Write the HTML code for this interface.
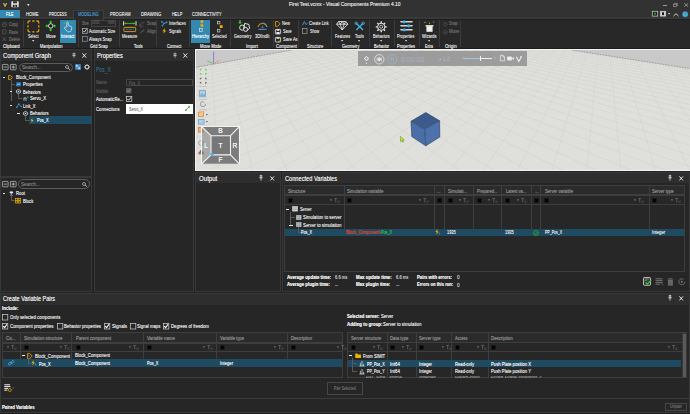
<!DOCTYPE html><html><head><meta charset="utf-8"><style>
html,body{margin:0;padding:0;}
body{width:690px;height:414px;overflow:hidden;position:relative;background:#282828;font-family:"Liberation Sans",sans-serif;}
.a{position:absolute;}
.t{white-space:nowrap;text-shadow:0 0 0.25px currentColor;}
svg.a{overflow:visible;}
</style></head><body>
<div class="a" style="left:0.00px;top:0.00px;width:690.00px;height:49.00px;background:#282828;"></div>
<div class="a" style="left:0.00px;top:0.00px;width:690.00px;height:17.00px;background:#323232;"></div>
<div class="a" style="left:0.00px;top:17.00px;width:690.00px;height:1.50px;background:#393939;"></div>
<div class="a" style="left:0.00px;top:18.50px;width:690.00px;height:1.00px;background:#1f1f1f;"></div>
<div class="a" style="left:0.00px;top:48.30px;width:690.00px;height:1.20px;background:#1c1c1c;"></div>
<div class="a" style="left:2.00px;top:1.80px;width:6.00px;height:5.60px;background:#1b2e55;border-radius:1px;"></div>
<svg class="a" style="left:2px;top:1.8px;" width="7" height="7" viewBox="0 0 7 7"><path d="M0.8 1 L2.2 1 L3 3 L4 1 L5.3 1 L3.6 4.8 L2.5 4.8 Z" fill="#f0b400"/></svg>
<svg class="a" style="left:11.4px;top:1px;" width="9" height="8" viewBox="0 0 9 8"><rect x="0.3" y="0.3" width="7.4" height="5.9" rx="0.8" fill="#e8e8e8"/><rect x="2" y="0.3" width="4" height="2" fill="#2b2b2b"/><rect x="1.8" y="3.8" width="4.4" height="2.4" fill="#2b2b2b"/><rect x="3.6" y="4.2" width="0.8" height="2" fill="#e8e8e8"/></svg>
<svg class="a" style="left:26.6px;top:4px;" width="4" height="4" viewBox="0 0 4 4"><path d="M0 0 L2.6 0 L1.3 2.2 Z" fill="#d8d8d8"/></svg>
<div class="a t" style="left:289.00px;top:1.90px;font-size:5.4px;line-height:5.4px;color:#e0e0e0;transform:scaleX(0.912);transform-origin:0 0;">First Test.vcmx - Visual Components Premium 4.10</div>
<div class="a" style="left:663.20px;top:4.70px;width:3.60px;height:0.70px;background:#9a9a9a;"></div>
<svg class="a" style="left:673.3px;top:3.2px;" width="6" height="5" viewBox="0 0 6 5"><rect x="0.4" y="1.2" width="3" height="2.4" fill="none" stroke="#9a9a9a" stroke-width="0.7"/><path d="M1.4 1.2 V0.4 H4.4 V2.8 H3.4" fill="none" stroke="#9a9a9a" stroke-width="0.7"/></svg>
<svg class="a" style="left:683.8px;top:2.9px;" width="6" height="5" viewBox="0 0 6 5"><path d="M0.3 0.3 L4.2 3.7 M4.2 0.3 L0.3 3.7" stroke="#a0a0a0" stroke-width="0.8"/></svg>
<div class="a" style="left:0.00px;top:9.60px;width:20.00px;height:8.60px;background:#3589b0;"></div>
<div class="a" style="left:73.30px;top:9.60px;width:30.70px;height:10.00px;background:#2a2a2a;border:0.8px solid #3e3e3e;border-bottom:none;box-sizing:border-box;"></div>
<div class="a t" style="left:6.40px;top:11.90px;font-size:5.0px;line-height:5.0px;color:#eef7fc;transform:scaleX(0.701);transform-origin:0 0;">FILE</div>
<div class="a t" style="left:25.80px;top:11.90px;font-size:5.0px;line-height:5.0px;color:#dcdcdc;transform:scaleX(0.833);transform-origin:0 0;">HOME</div>
<div class="a t" style="left:49.00px;top:11.90px;font-size:5.0px;line-height:5.0px;color:#dcdcdc;transform:scaleX(0.724);transform-origin:0 0;">PROCESS</div>
<div class="a t" style="left:78.30px;top:11.90px;font-size:5.0px;line-height:5.0px;color:#4390c0;transform:scaleX(0.784);transform-origin:0 0;">MODELING</div>
<div class="a t" style="left:110.40px;top:11.90px;font-size:5.0px;line-height:5.0px;color:#dcdcdc;transform:scaleX(0.801);transform-origin:0 0;">PROGRAM</div>
<div class="a t" style="left:141.00px;top:11.90px;font-size:5.0px;line-height:5.0px;color:#dcdcdc;transform:scaleX(0.846);transform-origin:0 0;">DRAWING</div>
<div class="a t" style="left:171.70px;top:11.90px;font-size:5.0px;line-height:5.0px;color:#dcdcdc;transform:scaleX(0.789);transform-origin:0 0;">HELP</div>
<div class="a t" style="left:192.00px;top:11.90px;font-size:5.0px;line-height:5.0px;color:#dcdcdc;transform:scaleX(0.798);transform-origin:0 0;">CONNECTIVITY</div>
<svg class="a" style="left:652px;top:10.9px;" width="7" height="7" viewBox="0 0 7 7"><rect x="0.3" y="0.3" width="5.4" height="4.8" fill="#1a1a1a" stroke="#d0d0d0" stroke-width="0.7"/><rect x="2" y="1.8" width="2" height="1.8" fill="#2fa02f"/></svg>
<svg class="a" style="left:659.6px;top:10.9px;" width="7" height="7" viewBox="0 0 7 7"><rect x="0.3" y="0.3" width="5.4" height="4.8" fill="#d0d0d0" stroke="#d0d0d0" stroke-width="0.7"/><rect x="2" y="1.3" width="2" height="2.8" fill="#1a1a1a"/></svg>
<svg class="a" style="left:668px;top:12.6px;" width="4" height="3" viewBox="0 0 4 3"><path d="M0 0 H2.2 L1.1 1.8Z" fill="#d0d0d0"/></svg>
<svg class="a" style="left:673px;top:12.5px;" width="7" height="5" viewBox="0 0 7 5"><path d="M0.5 3 L3 0.7 L5.5 3" fill="none" stroke="#e0e0e0" stroke-width="0.9"/></svg>
<svg class="a" style="left:681.6px;top:10.8px;" width="8" height="8" viewBox="0 0 8 8"><circle cx="3.2" cy="3.2" r="3" fill="#4cb4e6" stroke="#3a2a20" stroke-width="0.4"/><path d="M2.3 2.4 Q3.2 1.6 4 2.4 Q4.2 3.3 3.2 3.6 V4.3" fill="none" stroke="#2a6a90" stroke-width="0.6"/></svg>
<div class="a" style="left:22.60px;top:20.00px;width:0.90px;height:27.00px;background:#3b3b3b;"></div>
<div class="a" style="left:78.40px;top:20.00px;width:0.90px;height:27.00px;background:#3b3b3b;"></div>
<div class="a" style="left:118.60px;top:20.00px;width:0.90px;height:27.00px;background:#3b3b3b;"></div>
<div class="a" style="left:155.80px;top:20.00px;width:0.90px;height:27.00px;background:#3b3b3b;"></div>
<div class="a" style="left:188.80px;top:20.00px;width:0.90px;height:27.00px;background:#3b3b3b;"></div>
<div class="a" style="left:229.80px;top:20.00px;width:0.90px;height:27.00px;background:#3b3b3b;"></div>
<div class="a" style="left:272.60px;top:20.00px;width:0.90px;height:27.00px;background:#3b3b3b;"></div>
<div class="a" style="left:298.20px;top:20.00px;width:0.90px;height:27.00px;background:#3b3b3b;"></div>
<div class="a" style="left:330.80px;top:20.00px;width:0.90px;height:27.00px;background:#3b3b3b;"></div>
<div class="a" style="left:369.40px;top:20.00px;width:0.90px;height:27.00px;background:#3b3b3b;"></div>
<div class="a" style="left:393.50px;top:20.00px;width:0.90px;height:27.00px;background:#3b3b3b;"></div>
<div class="a" style="left:419.00px;top:20.00px;width:0.90px;height:27.00px;background:#3b3b3b;"></div>
<div class="a" style="left:439.20px;top:20.00px;width:0.90px;height:27.00px;background:#3b3b3b;"></div>
<div class="a" style="left:460.20px;top:20.00px;width:0.90px;height:27.00px;background:#3b3b3b;"></div>
<div class="a t" style="left:2.90px;top:45.45px;font-size:4.9px;line-height:4.9px;color:#e4e4e4;transform:scaleX(0.801);transform-origin:0 0;">Clipboard</div>
<div class="a t" style="left:40.00px;top:45.45px;font-size:4.9px;line-height:4.9px;color:#e4e4e4;transform:scaleX(0.813);transform-origin:0 0;">Manipulation</div>
<div class="a t" style="left:90.00px;top:45.45px;font-size:4.9px;line-height:4.9px;color:#e4e4e4;transform:scaleX(0.803);transform-origin:0 0;">Grid Snap</div>
<div class="a t" style="left:134.40px;top:45.45px;font-size:4.9px;line-height:4.9px;color:#e4e4e4;transform:scaleX(0.753);transform-origin:0 0;">Tools</div>
<div class="a t" style="left:166.60px;top:45.45px;font-size:4.9px;line-height:4.9px;color:#e4e4e4;transform:scaleX(0.788);transform-origin:0 0;">Connect</div>
<div class="a t" style="left:199.60px;top:45.45px;font-size:4.9px;line-height:4.9px;color:#e4e4e4;transform:scaleX(0.837);transform-origin:0 0;">Move Mode</div>
<div class="a t" style="left:246.00px;top:45.45px;font-size:4.9px;line-height:4.9px;color:#e4e4e4;transform:scaleX(0.862);transform-origin:0 0;">Import</div>
<div class="a t" style="left:275.50px;top:45.45px;font-size:4.9px;line-height:4.9px;color:#e4e4e4;transform:scaleX(0.825);transform-origin:0 0;">Component</div>
<div class="a t" style="left:307.00px;top:45.45px;font-size:4.9px;line-height:4.9px;color:#e4e4e4;transform:scaleX(0.814);transform-origin:0 0;">Structure</div>
<div class="a t" style="left:341.80px;top:45.45px;font-size:4.9px;line-height:4.9px;color:#e4e4e4;transform:scaleX(0.809);transform-origin:0 0;">Geometry</div>
<div class="a t" style="left:374.00px;top:45.45px;font-size:4.9px;line-height:4.9px;color:#e4e4e4;transform:scaleX(0.785);transform-origin:0 0;">Behavior</div>
<div class="a t" style="left:397.20px;top:45.45px;font-size:4.9px;line-height:4.9px;color:#e4e4e4;transform:scaleX(0.810);transform-origin:0 0;">Properties</div>
<div class="a t" style="left:424.70px;top:45.45px;font-size:4.9px;line-height:4.9px;color:#e4e4e4;transform:scaleX(0.698);transform-origin:0 0;">Extra</div>
<div class="a t" style="left:445.00px;top:45.45px;font-size:4.9px;line-height:4.9px;color:#e4e4e4;transform:scaleX(0.887);transform-origin:0 0;">Origin</div>
<svg class="a" style="left:1.7px;top:21.5px;" width="6" height="7" viewBox="0 0 6 7"><circle cx="2.5" cy="2.6" r="2.1" fill="none" stroke="#6a6a6a" stroke-width="0.6"/><path d="M1.5 2.6 L2.5 1.6 L3.5 2.6" fill="none" stroke="#6a6a6a" stroke-width="0.5"/></svg>
<div class="a t" style="left:9.00px;top:21.70px;font-size:5.0px;line-height:5.0px;color:#6c6c6c;transform:scaleX(0.773);transform-origin:0 0;">Copy</div>
<svg class="a" style="left:2px;top:29px;" width="6" height="7" viewBox="0 0 6 7"><rect x="0.5" y="0.8" width="3.6" height="4" rx="0.6" fill="none" stroke="#6a6a6a" stroke-width="0.6"/></svg>
<div class="a t" style="left:9.00px;top:29.50px;font-size:5.0px;line-height:5.0px;color:#6c6c6c;transform:scaleX(0.703);transform-origin:0 0;">Paste</div>
<svg class="a" style="left:2px;top:37px;" width="6" height="6" viewBox="0 0 6 6"><path d="M0.4 0.4 L4 4 M4 0.4 L0.4 4" stroke="#6a6a6a" stroke-width="0.6"/></svg>
<div class="a t" style="left:9.00px;top:37.00px;font-size:5.0px;line-height:5.0px;color:#6c6c6c;transform:scaleX(0.740);transform-origin:0 0;">Delete</div>
<svg class="a" style="left:26.9px;top:19.8px;" width="14" height="14" viewBox="0 0 14 14"><path d="M1 3.6 V2.6 Q1 1 2.6 1 H3.4 M5.3 1 H7.5 M9.4 1 H10.2 Q11.8 1 11.8 2.6 V3.6 M11.8 5.3 V7.5 M11.8 9.2 V10.2 Q11.8 11.8 10.2 11.8 H9.4 M7.5 11.8 H5.3 M3.4 11.8 H2.6 Q1 11.8 1 10.2 V9.2 M1 7.5 V5.3" fill="none" stroke="#14203a" stroke-width="2.1"/><path d="M1 3.6 V2.6 Q1 1 2.6 1 H3.4 M5.3 1 H7.5 M9.4 1 H10.2 Q11.8 1 11.8 2.6 V3.6 M11.8 5.3 V7.5 M11.8 9.2 V10.2 Q11.8 11.8 10.2 11.8 H9.4 M7.5 11.8 H5.3 M3.4 11.8 H2.6 Q1 11.8 1 10.2 V9.2 M1 7.5 V5.3" fill="none" stroke="#eaa600" stroke-width="1.3"/></svg>
<div class="a t" style="left:27.80px;top:34.20px;font-size:5.4px;line-height:5.4px;color:#dcdcdc;transform:scaleX(0.699);transform-origin:0 0;">Select</div>
<svg class="a" style="left:32.4px;top:40px;" width="4" height="3" viewBox="0 0 4 3"><path d="M0 0 H2.4 L1.2 1.8Z" fill="#e0e0e0"/></svg>
<svg class="a" style="left:44.9px;top:20.1px;" width="13" height="13" viewBox="0 0 13 13"><path d="M5.7 0.2 L7.6 2.4 H6.5 V3.6 H4.9 V2.4 H3.8Z M5.7 11.6 L7.6 9.4 H6.5 V8.2 H4.9 V9.4 H3.8Z M0.1 5.9 L2.3 4 V5.1 H3.5 V6.7 H2.3 V7.8Z M11.3 5.9 L9.1 4 V5.1 H7.9 V6.7 H9.1 V7.8Z" fill="#32cc22" stroke="#1a3a1a" stroke-width="0.25"/><circle cx="5.7" cy="5.9" r="2.2" fill="#101010" stroke="#f0f0f0" stroke-width="0.9"/></svg>
<div class="a t" style="left:45.80px;top:34.20px;font-size:5.4px;line-height:5.4px;color:#dcdcdc;transform:scaleX(0.748);transform-origin:0 0;">Move</div>
<div class="a" style="left:59.70px;top:19.70px;width:16.60px;height:23.30px;background:#3589b0;"></div>
<svg class="a" style="left:63px;top:20.6px;" width="11" height="13" viewBox="0 0 11 13"><path d="M0.4 1.9 H2.4 M9.6 1.9 H7.6" stroke="#3ccc2c" stroke-width="1"/><path d="M3.8 5.8 V1.3 Q4.5 0.3 5.2 1.3 V4.6 L8.2 5.4 Q9 5.8 8.8 6.8 L8.3 9.4 Q7.6 10.8 6.2 10.8 H5.2 Q4.2 10.8 3.6 9.9 L1.5 7.3 Q1.2 6.5 2.1 6.3 Z" fill="none" stroke="#dfeaf0" stroke-width="0.75"/></svg>
<div class="a t" style="left:61.40px;top:34.30px;font-size:5.2px;line-height:5.2px;color:#f0f6fa;transform:scaleX(0.772);transform-origin:0 0;">Interact</div>
<div class="a t" style="left:81.50px;top:21.20px;font-size:5.0px;line-height:5.0px;color:#6c6c6c;transform:scaleX(0.687);transform-origin:0 0;">Size</div>
<div class="a" style="left:90.60px;top:19.80px;width:25.60px;height:7.30px;border:0.7px solid #444;box-sizing:border-box;"></div>
<div class="a t" style="left:91.80px;top:21.30px;font-size:4.8px;line-height:4.8px;color:#5a5a5a;transform:scaleX(0.685);transform-origin:0 0;">1000</div>
<div class="a t" style="left:108.30px;top:21.30px;font-size:4.8px;line-height:4.8px;color:#5a5a5a;transform:scaleX(0.836);transform-origin:0 0;">mm</div>
<svg class="a" style="left:82px;top:28.3px;" width="7" height="7" viewBox="0 0 7 7"><rect x="0.35" y="0.35" width="4.9" height="4.9" fill="none" stroke="#bbbbbb" stroke-width="0.7"/><path d="M1.2 2.8 L2.4 4 L4.5 1.2" fill="none" stroke="#f0f0f0" stroke-width="0.8"/></svg>
<div class="a t" style="left:89.40px;top:28.90px;font-size:5.2px;line-height:5.2px;color:#dcdcdc;transform:scaleX(0.755);transform-origin:0 0;">Automatic Size</div>
<svg class="a" style="left:82px;top:36.3px;" width="7" height="7" viewBox="0 0 7 7"><rect x="0.35" y="0.35" width="4.9" height="4.9" fill="none" stroke="#9a9a9a" stroke-width="0.7"/></svg>
<div class="a t" style="left:89.40px;top:36.80px;font-size:5.2px;line-height:5.2px;color:#dcdcdc;transform:scaleX(0.752);transform-origin:0 0;">Always Snap</div>
<svg class="a" style="left:122.5px;top:20.8px;" width="15" height="12" viewBox="0 0 15 12"><path d="M0.6 0.2 V4.6 M13 0.2 V4.6" stroke="#dddddd" stroke-width="1"/><path d="M1.4 2.4 H12.2" stroke="#3ccc2c" stroke-width="0.9"/><path d="M1.4 2.4 L3 1.3 V3.5Z M12.2 2.4 L10.6 1.3 V3.5Z" fill="#3ccc2c"/><rect x="0.9" y="6.4" width="11.8" height="4.2" rx="0.8" fill="#1e2a44" stroke="#e8a800" stroke-width="0.9"/><path d="M3 8.5 H10.6" stroke="#8fa0c0" stroke-width="0.6" stroke-dasharray="0.8 0.6"/></svg>
<div class="a t" style="left:121.60px;top:34.30px;font-size:5.2px;line-height:5.2px;color:#dcdcdc;transform:scaleX(0.756);transform-origin:0 0;">Measure</div>
<svg class="a" style="left:139.3px;top:21.7px;" width="7" height="6" viewBox="0 0 7 6"><path d="M0.6 3.8 L3.2 1.2 M3 0.4 L5.6 0.4 M2.2 2 A1.5 1.5 0 1 0 3.6 3.4" fill="none" stroke="#666" stroke-width="0.6"/></svg>
<div class="a t" style="left:146.60px;top:21.30px;font-size:5.0px;line-height:5.0px;color:#6c6c6c;transform:scaleX(0.778);transform-origin:0 0;">Snap</div>
<svg class="a" style="left:139.3px;top:29px;" width="7" height="6" viewBox="0 0 7 6"><path d="M0.5 4 L5 0.5 M1.5 4 L5.5 1" stroke="#666" stroke-width="0.6"/></svg>
<div class="a t" style="left:146.60px;top:29.10px;font-size:5.0px;line-height:5.0px;color:#6c6c6c;transform:scaleX(0.820);transform-origin:0 0;">Align</div>
<svg class="a" style="left:160.8px;top:21px;" width="8" height="7" viewBox="0 0 8 7"><path d="M3 2.6 L0.8 0.8 M3 2.6 L5.6 1.4 M3 2.6 L1.4 4.8" stroke="#3aa8dc" stroke-width="0.9"/><circle cx="0.8" cy="0.8" r="0.8" fill="#3aa8dc"/><circle cx="5.6" cy="1.4" r="0.8" fill="#3aa8dc"/><circle cx="1.4" cy="4.8" r="0.8" fill="#3aa8dc"/></svg>
<div class="a t" style="left:168.90px;top:21.10px;font-size:5.0px;line-height:5.0px;color:#dcdcdc;transform:scaleX(0.765);transform-origin:0 0;">Interfaces</div>
<svg class="a" style="left:162px;top:28.4px;" width="6" height="7" viewBox="0 0 6 7"><path d="M2.8 0 L0.4 3.2 H2 L1.4 5.8 L4.2 2.4 H2.5Z" fill="#f0b000"/></svg>
<div class="a t" style="left:168.90px;top:29.10px;font-size:5.0px;line-height:5.0px;color:#dcdcdc;transform:scaleX(0.738);transform-origin:0 0;">Signals</div>
<div class="a" style="left:191.00px;top:19.70px;width:19.00px;height:23.30px;background:#3589b0;"></div>
<svg class="a" style="left:199.8px;top:20.2px;" width="6" height="14" viewBox="0 0 6 14"><rect x="0.6" y="0.3" width="2.6" height="2.4" fill="#f0b000"/><rect x="0.6" y="4.3" width="2.6" height="2.4" fill="#f0b000"/><path d="M1.9 2.7 V4.3" stroke="#f0b000" stroke-width="0.5"/><rect x="-0.6" y="8.6" width="2.8" height="2.8" fill="none" stroke="#f0f0f0" stroke-width="0.6"/></svg>
<div class="a t" style="left:192.00px;top:34.35px;font-size:5.1px;line-height:5.1px;color:#f0f6fa;transform:scaleX(0.779);transform-origin:0 0;">Hierarchy</div>
<svg class="a" style="left:216.5px;top:20.5px;" width="7" height="13" viewBox="0 0 7 13"><rect x="0.3" y="0.3" width="2.6" height="2.6" fill="none" stroke="#e0e0e0" stroke-width="0.6"/><rect x="2.8" y="4.2" width="2.8" height="2.8" fill="#f0b000"/><rect x="0.3" y="8.4" width="2.6" height="2.6" fill="none" stroke="#e0e0e0" stroke-width="0.6"/></svg>
<div class="a t" style="left:212.40px;top:34.35px;font-size:5.1px;line-height:5.1px;color:#dcdcdc;transform:scaleX(0.741);transform-origin:0 0;">Selected</div>
<svg class="a" style="left:237.5px;top:19.7px;" width="14" height="14" viewBox="0 0 14 14"><path d="M2 0 V2.4" stroke="#2ecc2e" stroke-width="1.4"/><path d="M0.2 2 H3.8 L2 4.2Z" fill="#2ecc2e"/><circle cx="4.2" cy="7.6" r="2.6" fill="#2b2b2b" stroke="#f0f0f0" stroke-width="0.9"/><path d="M6.6 3.4 L10.8 4.4 L11.6 8.4 L8.6 10.8 L5.6 8.6Z" fill="none" stroke="#f0f0f0" stroke-width="0.9"/><circle cx="7.6" cy="9.4" r="2" fill="#2b2b2b" stroke="#f0f0f0" stroke-width="0.9"/></svg>
<div class="a t" style="left:234.40px;top:34.30px;font-size:5.2px;line-height:5.2px;color:#dcdcdc;transform:scaleX(0.762);transform-origin:0 0;">Geometry</div>
<svg class="a" style="left:256.5px;top:21.8px;" width="12" height="9" viewBox="0 0 12 9"><path d="M1 5 A4.6 4.6 0 0 1 10 5" fill="none" stroke="#e8a000" stroke-width="1"/><path d="M6 1 A4.6 4.6 0 0 1 10 5" fill="none" stroke="#3aa0d8" stroke-width="1"/><path d="M5.5 3.2 L4.4 6 L6.6 6Z" fill="#777"/><rect x="1.5" y="6.8" width="8" height="1.2" fill="#3a8ad0"/></svg>
<div class="a t" style="left:254.70px;top:34.30px;font-size:5.2px;line-height:5.2px;color:#dcdcdc;transform:scaleX(0.808);transform-origin:0 0;">3DfindIt</div>
<svg class="a" style="left:275px;top:21px;" width="7" height="7" viewBox="0 0 7 7"><path d="M0.5 0.5 H2.8 L5 2.9 L2.8 5.3 H0.5Z" fill="none" stroke="#e8a800" stroke-width="0.8"/></svg>
<div class="a t" style="left:282.00px;top:21.40px;font-size:5.0px;line-height:5.0px;color:#dcdcdc;transform:scaleX(0.796);transform-origin:0 0;">New</div>
<svg class="a" style="left:275px;top:29px;" width="7" height="7" viewBox="0 0 7 7"><rect x="0.4" y="0.4" width="5.2" height="4.6" rx="0.5" fill="none" stroke="#e8e8e8" stroke-width="0.8"/><rect x="1.6" y="0.4" width="2.8" height="1.4" fill="#e8e8e8"/><rect x="1.4" y="3" width="3.2" height="2" fill="#e8e8e8"/></svg>
<div class="a t" style="left:282.50px;top:29.10px;font-size:5.0px;line-height:5.0px;color:#dcdcdc;transform:scaleX(0.763);transform-origin:0 0;">Save</div>
<svg class="a" style="left:275px;top:36.5px;" width="7" height="7" viewBox="0 0 7 7"><rect x="0.4" y="0.4" width="5.2" height="4.6" rx="0.5" fill="none" stroke="#e8e8e8" stroke-width="0.8"/><rect x="1.6" y="0.4" width="2.8" height="1.4" fill="#e8e8e8"/><path d="M3 5.2 L5.8 3.2" stroke="#e8a800" stroke-width="1"/></svg>
<div class="a t" style="left:282.50px;top:37.00px;font-size:5.0px;line-height:5.0px;color:#dcdcdc;transform:scaleX(0.790);transform-origin:0 0;">Save As</div>
<svg class="a" style="left:301.8px;top:21px;" width="7" height="6" viewBox="0 0 7 6"><path d="M0.5 4.2 L2.4 0.6 L4 3.6 L5.6 2.2" fill="none" stroke="#3a9ad8" stroke-width="0.9"/></svg>
<div class="a t" style="left:308.80px;top:21.40px;font-size:5.0px;line-height:5.0px;color:#dcdcdc;transform:scaleX(0.770);transform-origin:0 0;">Create Link</div>
<svg class="a" style="left:302.4px;top:28.4px;" width="7" height="7" viewBox="0 0 7 7"><rect x="0.4" y="0.4" width="4.6" height="5" fill="none" stroke="#a0a0a0" stroke-width="0.7"/></svg>
<div class="a t" style="left:310.00px;top:29.30px;font-size:5.0px;line-height:5.0px;color:#dcdcdc;transform:scaleX(0.733);transform-origin:0 0;">Show</div>
<svg class="a" style="left:336px;top:21px;" width="14" height="11" viewBox="0 0 14 11"><path d="M2.6 0.5 H9.8 L11.9 3.2 L6.2 8.9 L0.5 3.2Z M0.5 3.2 H11.9 M4.2 3.2 L6.2 8.9 L8.2 3.2 M2.6 0.5 L4.2 3.2 L6.2 0.5 L8.2 3.2 L9.8 0.5" fill="none" stroke="#f4f4f4" stroke-width="0.8"/></svg>
<div class="a t" style="left:334.80px;top:34.30px;font-size:5.2px;line-height:5.2px;color:#dcdcdc;transform:scaleX(0.735);transform-origin:0 0;">Features</div>
<svg class="a" style="left:341px;top:40px;" width="4" height="3" viewBox="0 0 4 3"><path d="M0 0 H2.2 L1.1 1.8Z" fill="#e0e0e0"/></svg>
<svg class="a" style="left:354.5px;top:21.5px;" width="11" height="11" viewBox="0 0 11 11"><path d="M1.4 1.4 L8 8 M8 1.4 L1.4 8" stroke="#4ab8ec" stroke-width="1.3"/><circle cx="1.2" cy="1.2" r="1.2" fill="none" stroke="#4ab8ec" stroke-width="0.8"/><circle cx="8.2" cy="1.2" r="1.2" fill="none" stroke="#4ab8ec" stroke-width="0.8"/></svg>
<div class="a t" style="left:355.00px;top:34.30px;font-size:5.2px;line-height:5.2px;color:#dcdcdc;transform:scaleX(0.726);transform-origin:0 0;">Tools</div>
<svg class="a" style="left:358.3px;top:40px;" width="4" height="3" viewBox="0 0 4 3"><path d="M0 0 H2.2 L1.1 1.8Z" fill="#e0e0e0"/></svg>
<svg class="a" style="left:375.4px;top:21px;" width="14" height="13" viewBox="0 0 14 13"><circle cx="6.2" cy="5.8" r="3.6" fill="none" stroke="#f0f0f0" stroke-width="1"/><circle cx="6.2" cy="5.8" r="1.5" fill="none" stroke="#f0f0f0" stroke-width="0.7"/><path d="M6.2 0.3 V2 M6.2 9.6 V11.3 M0.7 5.8 H2.4 M10 5.8 H11.7 M2.3 1.9 L3.5 3.1 M8.9 8.5 L10.1 9.7 M10.1 1.9 L8.9 3.1 M2.3 9.7 L3.5 8.5" stroke="#f0f0f0" stroke-width="1.3"/></svg>
<div class="a t" style="left:373.20px;top:34.10px;font-size:5.2px;line-height:5.2px;color:#dcdcdc;transform:scaleX(0.726);transform-origin:0 0;">Behaviors</div>
<svg class="a" style="left:380px;top:40.2px;" width="4" height="3" viewBox="0 0 4 3"><path d="M0 0 H2.2 L1.1 1.8Z" fill="#e0e0e0"/></svg>
<svg class="a" style="left:399.5px;top:20.2px;" width="14" height="13" viewBox="0 0 14 13"><path d="M1 1.8 H12 M1 5.8 H12 M1 9.8 H12" stroke="#d8d8d8" stroke-width="1.6" stroke-linecap="round"/><circle cx="4" cy="1.8" r="1.6" fill="#3ab4ec"/><circle cx="8.6" cy="5.8" r="1.6" fill="#3ab4ec"/><circle cx="4.4" cy="9.8" r="1.6" fill="#3ab4ec"/></svg>
<div class="a t" style="left:397.20px;top:34.10px;font-size:5.2px;line-height:5.2px;color:#dcdcdc;transform:scaleX(0.734);transform-origin:0 0;">Properties</div>
<svg class="a" style="left:405.2px;top:40.2px;" width="4" height="3" viewBox="0 0 4 3"><path d="M0 0 H2.2 L1.1 1.8Z" fill="#e0e0e0"/></svg>
<svg class="a" style="left:423.5px;top:21px;" width="12" height="12" viewBox="0 0 12 12"><rect x="2.4" y="4.8" width="6.2" height="6" fill="#f0f0f0"/><rect x="1.6" y="4" width="7.8" height="1.6" fill="#d8d8d8"/><circle cx="1" cy="1.4" r="0.6" fill="#f0b000"/><circle cx="5.5" cy="2.2" r="0.6" fill="#f0b000"/><circle cx="9.6" cy="1" r="0.6" fill="#f0b000"/></svg>
<div class="a t" style="left:421.80px;top:34.10px;font-size:5.2px;line-height:5.2px;color:#dcdcdc;transform:scaleX(0.772);transform-origin:0 0;">Wizards</div>
<svg class="a" style="left:428px;top:40.2px;" width="4" height="3" viewBox="0 0 4 3"><path d="M0 0 H2.2 L1.1 1.8Z" fill="#e0e0e0"/></svg>
<svg class="a" style="left:442.8px;top:21.6px;" width="6" height="6" viewBox="0 0 6 6"><path d="M2.3 0.3 L4.3 2.3 L2.3 4.3 L0.3 2.3Z" fill="none" stroke="#5e5e5e" stroke-width="0.7"/></svg>
<div class="a t" style="left:449.30px;top:21.30px;font-size:5.0px;line-height:5.0px;color:#6c6c6c;transform:scaleX(0.744);transform-origin:0 0;">Snap</div>
<svg class="a" style="left:442.8px;top:29.6px;" width="6" height="6" viewBox="0 0 6 6"><circle cx="2.3" cy="2.3" r="1.9" fill="none" stroke="#5e5e5e" stroke-width="0.6"/><circle cx="2.3" cy="2.3" r="0.6" fill="#5e5e5e"/></svg>
<div class="a t" style="left:449.30px;top:29.10px;font-size:5.0px;line-height:5.0px;color:#6c6c6c;transform:scaleX(0.833);transform-origin:0 0;">Move</div>
<div class="a" style="left:0.00px;top:48.60px;width:690.00px;height:365.40px;background:#222222;"></div>
<div class="a" style="left:0.00px;top:49.00px;width:92.40px;height:128.00px;background:#262626;"></div>
<div class="a" style="left:0.00px;top:49.00px;width:92.40px;height:11.80px;background:#2e2e2e;"></div>
<div class="a" style="left:0.00px;top:49.00px;width:92.40px;height:128.00px;border:1px solid #383838;box-sizing:border-box;"></div>
<div class="a" style="left:0.00px;top:177.00px;width:92.40px;height:114.80px;background:#262626;"></div>
<div class="a" style="left:0.00px;top:177.00px;width:92.40px;height:114.80px;border:1px solid #383838;box-sizing:border-box;"></div>
<div class="a" style="left:93.50px;top:49.00px;width:100.10px;height:242.80px;background:#262626;"></div>
<div class="a" style="left:93.50px;top:49.00px;width:100.10px;height:11.80px;background:#2e2e2e;"></div>
<div class="a" style="left:93.50px;top:49.00px;width:100.10px;height:242.80px;border:1px solid #383838;box-sizing:border-box;"></div>
<div class="a" style="left:194.60px;top:171.80px;width:86.40px;height:120.00px;background:#262626;"></div>
<div class="a" style="left:194.60px;top:171.80px;width:86.40px;height:11.60px;background:#2e2e2e;"></div>
<div class="a" style="left:194.60px;top:171.80px;width:86.40px;height:120.00px;border:1px solid #383838;box-sizing:border-box;"></div>
<div class="a" style="left:281.80px;top:171.80px;width:408.20px;height:120.00px;background:#262626;"></div>
<div class="a" style="left:281.80px;top:171.80px;width:408.20px;height:11.60px;background:#2e2e2e;"></div>
<div class="a" style="left:281.80px;top:171.80px;width:408.20px;height:120.00px;border:1px solid #383838;box-sizing:border-box;"></div>
<div class="a" style="left:0.00px;top:293.00px;width:690.00px;height:119.60px;background:#262626;"></div>
<div class="a" style="left:0.00px;top:293.00px;width:690.00px;height:12.40px;background:#2e2e2e;"></div>
<div class="a" style="left:0.00px;top:293.00px;width:690.00px;height:119.60px;border:1px solid #383838;box-sizing:border-box;"></div>
<div class="a t" style="left:3.00px;top:51.70px;font-size:7.0px;line-height:7.0px;color:#e4e4e4;transform:scaleX(0.833);transform-origin:0 0;">Component Graph</div>
<svg class="a" style="left:72px;top:53px;" width="5" height="6" viewBox="0 0 5 6"><path d="M0.8 0.3 H3.2 M1.2 0.3 V2.4 H2.8 V0.3 M0.4 2.6 H3.6 M2 2.6 V4.8" stroke="#d0d0d0" stroke-width="0.7" fill="none"/></svg>
<svg class="a" style="left:82px;top:52.9px;" width="6" height="6" viewBox="0 0 6 6"><path d="M0.4 0.4 L4.199999999999999 4.6 M4.199999999999999 0.4 L0.4 4.6" stroke="#e8e8e8" stroke-width="1"/></svg>
<svg class="a" style="left:2px;top:63.8px;" width="8" height="8" viewBox="0 0 8 8"><rect x="0.4" y="0.4" width="5.7" height="5.4" rx="0.6" fill="none" stroke="#c8c8c8" stroke-width="0.7"/><path d="M1.6 3.1 H4.9" stroke="#e0e0e0" stroke-width="0.7"/></svg>
<svg class="a" style="left:9.7px;top:63.8px;" width="8" height="8" viewBox="0 0 8 8"><rect x="0.4" y="0.4" width="5.7" height="5.4" rx="0.6" fill="none" stroke="#c8c8c8" stroke-width="0.7"/><path d="M1.6 3.1 H4.9 M3.25 1.5 V4.7" stroke="#e0e0e0" stroke-width="0.7"/></svg>
<div class="a" style="left:18.50px;top:62.70px;width:54.50px;height:9.30px;border:0.9px solid #5c5c5c;border-radius:5px;box-sizing:border-box;"></div>
<div class="a t" style="left:21.90px;top:65.25px;font-size:5.6px;line-height:5.6px;color:#7a7a7a;transform:scaleX(0.830);transform-origin:0 0;">Search...</div>
<svg class="a" style="left:65px;top:64.9px;" width="7" height="6" viewBox="0 0 7 6"><circle cx="2" cy="2" r="1.5" fill="none" stroke="#c0c0c0" stroke-width="0.7"/><path d="M3.1 3.1 L5 4.8" stroke="#c0c0c0" stroke-width="0.9"/></svg>
<svg class="a" style="left:75px;top:64px;" width="7" height="7" viewBox="0 0 7 7"><rect x="0.2" y="0.2" width="5.6" height="5.6" fill="#4a8ac0"/><rect x="0.8" y="0.8" width="2" height="2" fill="#a8d8f0"/><rect x="3.2" y="3.2" width="2" height="2" fill="#a8d8f0"/></svg>
<svg class="a" style="left:84px;top:64px;" width="7" height="7" viewBox="0 0 7 7"><circle cx="3" cy="3" r="1.8" fill="none" stroke="#c8c8c8" stroke-width="1.1"/><path d="M3 0 V1.2 M3 4.8 V6 M0 3 H1.2 M4.8 3 H6 M0.9 0.9 L1.7 1.7 M4.3 4.3 L5.1 5.1 M5.1 0.9 L4.3 1.7 M0.9 5.1 L1.7 4.3" stroke="#c8c8c8" stroke-width="0.9"/></svg>
<div class="a" style="left:2.60px;top:76.50px;width:2.20px;height:0.90px;background:#e0e0e0;"></div>
<svg class="a" style="left:8.3px;top:74.6px;" width="6" height="6" viewBox="0 0 6 6"><path d="M0.6 0.5 H2.5 L4.6 2.5 L2.5 4.5 H0.6Z" fill="none" stroke="#e0a000" stroke-width="0.9"/><path d="M1.6 1.6 L3 2.5 L1.6 3.4Z" fill="#3a6ab0"/></svg>
<div class="a t" style="left:15.70px;top:74.90px;font-size:5.6px;line-height:5.6px;color:#e2e2e2;transform:scaleX(0.758);transform-origin:0 0;">Block_Component</div>
<div class="a" style="left:10.70px;top:80.00px;width:0.70px;height:21.00px;background:#5a5a5a;"></div>
<div class="a" style="left:11.00px;top:84.00px;width:3.60px;height:0.70px;background:#5a5a5a;"></div>
<svg class="a" style="left:16px;top:82px;" width="6" height="6" viewBox="0 0 6 6"><rect x="0.2" y="0.2" width="4.6" height="4.2" fill="#2f78b8"/><path d="M1 3.4 L2.2 1.8 L3 2.8 L4 1.2" stroke="#bfe4f8" stroke-width="0.6" fill="none"/></svg>
<div class="a t" style="left:23.00px;top:82.10px;font-size:5.6px;line-height:5.6px;color:#e2e2e2;transform:scaleX(0.768);transform-origin:0 0;">Properties</div>
<div class="a" style="left:9.80px;top:91.20px;width:2.20px;height:0.90px;background:#e0e0e0;"></div>
<svg class="a" style="left:16px;top:89.2px;" width="6" height="6" viewBox="0 0 6 6"><path d="M2.5 0.4 L4.6 1.6 V3.4 L2.5 4.6 L0.4 3.4 V1.6Z" fill="none" stroke="#e0e0e0" stroke-width="0.8"/><circle cx="2.5" cy="2.5" r="0.8" fill="#e0e0e0"/></svg>
<div class="a t" style="left:23.00px;top:89.50px;font-size:5.6px;line-height:5.6px;color:#e2e2e2;transform:scaleX(0.718);transform-origin:0 0;">Behaviors</div>
<div class="a" style="left:17.60px;top:94.00px;width:0.70px;height:4.40px;background:#5a5a5a;"></div>
<div class="a" style="left:17.60px;top:98.00px;width:4.00px;height:0.70px;background:#5a5a5a;"></div>
<svg class="a" style="left:23px;top:95.6px;" width="7" height="6" viewBox="0 0 7 6"><rect x="0" y="1.8" width="4" height="3" fill="#3a70c0"/><path d="M0.2 2.6 Q2 -0.2 3.8 2.6" fill="#f0b000"/><rect x="4.2" y="0.6" width="1.2" height="1.2" fill="#2ecc2e"/></svg>
<div class="a t" style="left:29.60px;top:96.00px;font-size:5.6px;line-height:5.6px;color:#e2e2e2;transform:scaleX(0.749);transform-origin:0 0;">Servo_X</div>
<div class="a" style="left:9.80px;top:105.20px;width:2.20px;height:0.90px;background:#e0e0e0;"></div>
<svg class="a" style="left:15.6px;top:102.8px;" width="7" height="6" viewBox="0 0 7 6"><path d="M0.8 4.2 L2.8 1 L5.2 3.6" fill="none" stroke="#4aa0d8" stroke-width="0.8"/><circle cx="0.8" cy="4.2" r="0.7" fill="#4aa0d8"/><circle cx="2.8" cy="1" r="0.7" fill="#4aa0d8"/><circle cx="5.2" cy="3.6" r="0.7" fill="#4aa0d8"/></svg>
<div class="a t" style="left:22.70px;top:103.70px;font-size:5.6px;line-height:5.6px;color:#e2e2e2;transform:scaleX(0.724);transform-origin:0 0;">Link_X</div>
<div class="a" style="left:17.40px;top:112.70px;width:2.20px;height:0.90px;background:#e0e0e0;"></div>
<svg class="a" style="left:22.7px;top:110.7px;" width="6" height="6" viewBox="0 0 6 6"><path d="M2.5 0.4 L4.6 1.6 V3.4 L2.5 4.6 L0.4 3.4 V1.6Z" fill="none" stroke="#e0e0e0" stroke-width="0.8"/><circle cx="2.5" cy="2.5" r="0.8" fill="#e0e0e0"/></svg>
<div class="a t" style="left:29.60px;top:111.00px;font-size:5.6px;line-height:5.6px;color:#e2e2e2;transform:scaleX(0.746);transform-origin:0 0;">Behaviors</div>
<div class="a" style="left:24.60px;top:115.60px;width:0.70px;height:4.40px;background:#5a5a5a;"></div>
<div class="a" style="left:24.60px;top:119.60px;width:4.00px;height:0.70px;background:#5a5a5a;"></div>
<div class="a" style="left:28.90px;top:116.30px;width:63.10px;height:7.40px;background:#1f4b62;"></div>
<svg class="a" style="left:30.3px;top:117.6px;" width="6" height="6" viewBox="0 0 6 6"><path d="M2.6 0 L0.3 2.6 H1.8 L1.2 4.8 L3.8 2 H2.2Z" fill="#f0b000"/><path d="M3.6 3.4 V4.8" stroke="#3a70c0" stroke-width="0.6"/></svg>
<div class="a t" style="left:37.20px;top:117.90px;font-size:5.6px;line-height:5.6px;color:#f0f0f0;transform:scaleX(0.708);transform-origin:0 0;">Pos_X</div>
<svg class="a" style="left:2px;top:180.8px;" width="8" height="8" viewBox="0 0 8 8"><rect x="0.4" y="0.4" width="5.7" height="5.4" rx="0.6" fill="none" stroke="#c8c8c8" stroke-width="0.7"/><path d="M1.6 3.1 H4.9" stroke="#e0e0e0" stroke-width="0.7"/></svg>
<svg class="a" style="left:9.6px;top:180.8px;" width="8" height="8" viewBox="0 0 8 8"><rect x="0.4" y="0.4" width="5.7" height="5.4" rx="0.6" fill="none" stroke="#c8c8c8" stroke-width="0.7"/><path d="M1.6 3.1 H4.9 M3.25 1.5 V4.7" stroke="#e0e0e0" stroke-width="0.7"/></svg>
<div class="a" style="left:17.90px;top:179.40px;width:72.30px;height:9.30px;border:0.9px solid #5c5c5c;border-radius:5px;box-sizing:border-box;"></div>
<div class="a t" style="left:21.30px;top:181.95px;font-size:5.6px;line-height:5.6px;color:#7a7a7a;transform:scaleX(0.830);transform-origin:0 0;">Search...</div>
<svg class="a" style="left:82.2px;top:181.6px;" width="7" height="6" viewBox="0 0 7 6"><circle cx="2" cy="2" r="1.5" fill="none" stroke="#c0c0c0" stroke-width="0.7"/><path d="M3.1 3.1 L5 4.8" stroke="#c0c0c0" stroke-width="0.9"/></svg>
<div class="a" style="left:2.80px;top:192.80px;width:2.20px;height:0.90px;background:#e0e0e0;"></div>
<svg class="a" style="left:9px;top:191px;" width="6" height="6" viewBox="0 0 6 6"><path d="M0.4 1 Q2.4 -0.4 4.4 1 L3.6 2.6 H1.2Z" fill="#e8e8e8"/><path d="M2.4 2.6 V4.4 M1.2 4.4 H3.6" stroke="#e8e8e8" stroke-width="0.6"/></svg>
<div class="a t" style="left:15.80px;top:191.10px;font-size:5.6px;line-height:5.6px;color:#e2e2e2;transform:scaleX(0.762);transform-origin:0 0;">Root</div>
<div class="a" style="left:11.00px;top:195.00px;width:0.70px;height:5.60px;background:#5a5a5a;"></div>
<div class="a" style="left:11.00px;top:200.30px;width:3.60px;height:0.70px;background:#5a5a5a;"></div>
<svg class="a" style="left:15.2px;top:198px;" width="7" height="7" viewBox="0 0 7 7"><rect x="0.4" y="0.4" width="2.3" height="2.1" fill="none" stroke="#e0a000" stroke-width="0.8"/><rect x="3.3" y="0.4" width="2.3" height="2.1" fill="none" stroke="#e0a000" stroke-width="0.8"/><rect x="0.4" y="2.9" width="2.3" height="2.1" fill="none" stroke="#e0a000" stroke-width="0.8"/><rect x="3.3" y="2.9" width="2.3" height="2.1" fill="none" stroke="#e0a000" stroke-width="0.8"/></svg>
<div class="a t" style="left:22.70px;top:198.70px;font-size:5.6px;line-height:5.6px;color:#e2e2e2;transform:scaleX(0.748);transform-origin:0 0;">Block</div>
<div class="a t" style="left:96.70px;top:51.70px;font-size:7.0px;line-height:7.0px;color:#e4e4e4;transform:scaleX(0.808);transform-origin:0 0;">Properties</div>
<svg class="a" style="left:173px;top:53px;" width="5" height="6" viewBox="0 0 5 6"><path d="M0.8 0.3 H3.2 M1.2 0.3 V2.4 H2.8 V0.3 M0.4 2.6 H3.6 M2 2.6 V4.8" stroke="#d0d0d0" stroke-width="0.7" fill="none"/></svg>
<svg class="a" style="left:183px;top:52.9px;" width="6" height="6" viewBox="0 0 6 6"><path d="M0.4 0.4 L4.199999999999999 4.6 M4.199999999999999 0.4 L0.4 4.6" stroke="#e8e8e8" stroke-width="1"/></svg>
<div class="a t" style="left:96.20px;top:65.80px;font-size:7.4px;line-height:7.4px;color:#3a7aa0;transform:scaleX(0.683);transform-origin:0 0;text-shadow:none;">Pos_X</div>
<div class="a t" style="left:96.20px;top:80.40px;font-size:5.6px;line-height:5.6px;color:#585858;transform:scaleX(0.722);transform-origin:0 0;">Name</div>
<div class="a" style="left:125.60px;top:78.80px;width:67.40px;height:7.20px;border:0.8px solid #444;box-sizing:border-box;"></div>
<div class="a t" style="left:128.50px;top:80.50px;font-size:5.4px;line-height:5.4px;color:#585858;transform:scaleX(0.684);transform-origin:0 0;">Pos_X</div>
<div class="a t" style="left:96.20px;top:88.60px;font-size:5.6px;line-height:5.6px;color:#585858;transform:scaleX(0.731);transform-origin:0 0;">Visible</div>
<svg class="a" style="left:126px;top:88.3px;" width="7" height="7" viewBox="0 0 7 7"><rect x="0" y="0" width="5.4" height="5.2" fill="#5a5a5a"/><path d="M1 2.6 L2.3 3.8 L4.4 1.2" fill="none" stroke="#9a9a9a" stroke-width="0.8"/></svg>
<div class="a t" style="left:96.20px;top:96.70px;font-size:5.6px;line-height:5.6px;color:#e2e2e2;transform:scaleX(0.740);transform-origin:0 0;">AutomaticRe...</div>
<svg class="a" style="left:125.6px;top:96.2px;" width="8" height="7" viewBox="0 0 8 7"><rect x="0.4" y="0.4" width="5.4" height="5" fill="none" stroke="#d8d8d8" stroke-width="0.7"/><path d="M1.3 2.9 L2.6 4.2 L4.9 1.4" fill="none" stroke="#f4f4f4" stroke-width="0.9"/></svg>
<div class="a t" style="left:96.20px;top:106.50px;font-size:5.6px;line-height:5.6px;color:#e2e2e2;transform:scaleX(0.758);transform-origin:0 0;">Connections</div>
<div class="a" style="left:125.60px;top:103.50px;width:67.40px;height:10.10px;background:#ffffff;"></div>
<div class="a t" style="left:129.20px;top:106.60px;font-size:5.4px;line-height:5.4px;color:#404040;transform:scaleX(0.666);transform-origin:0 0;text-shadow:none;">Servo_X</div>
<svg class="a" style="left:185px;top:106px;" width="6" height="6" viewBox="0 0 6 6"><path d="M0.6 4.4 L4.4 0.6" stroke="#2fae2f" stroke-width="0.9"/><circle cx="0.9" cy="4.1" r="0.9" fill="#2fae2f"/><circle cx="4.1" cy="0.9" r="0.9" fill="#2fae2f"/></svg>
<div class="a" style="left:195.30px;top:49.00px;width:495.00px;height:121.90px;background:#f4f4f4;"></div>
<div class="a" style="left:196.00px;top:49.60px;width:494.00px;height:120.60px;background:#dfdfdb;"></div>
<svg class="a" style="left:196px;top:49.6px;overflow:hidden" width="494" height="120.6"><path d="M221.99 -23.06 L10390.03 1593.40" fill="none" stroke="#d2d2d0" stroke-width="0.55"/><path d="M218.88 -22.50 L10069.05 1593.40" fill="none" stroke="#d2d2d0" stroke-width="0.55"/><path d="M215.67 -21.92 L9748.08 1593.40" fill="none" stroke="#d2d2d0" stroke-width="0.55"/><path d="M212.35 -21.32 L9427.10 1593.40" fill="none" stroke="#d2d2d0" stroke-width="0.55"/><path d="M208.90 -20.70 L9106.13 1593.40" fill="none" stroke="#d2d2d0" stroke-width="0.55"/><path d="M205.34 -20.05 L8785.15 1593.40" fill="none" stroke="#d2d2d0" stroke-width="0.55"/><path d="M201.64 -19.39 L8464.18 1593.40" fill="none" stroke="#d2d2d0" stroke-width="0.55"/><path d="M197.81 -18.70 L8143.20 1593.40" fill="none" stroke="#d2d2d0" stroke-width="0.55"/><path d="M193.83 -17.98 L7822.23 1593.40" fill="none" stroke="#d2d2d0" stroke-width="0.55"/><path d="M189.70 -17.23 L7501.25 1593.40" fill="none" stroke="#d2d2d0" stroke-width="0.55"/><path d="M185.41 -16.46 L7180.28 1593.40" fill="none" stroke="#d2d2d0" stroke-width="0.55"/><path d="M180.94 -15.66 L6859.31 1593.40" fill="none" stroke="#d2d2d0" stroke-width="0.55"/><path d="M176.29 -14.82 L6538.33 1593.40" fill="none" stroke="#d2d2d0" stroke-width="0.55"/><path d="M171.45 -13.94 L6217.36 1593.40" fill="none" stroke="#d2d2d0" stroke-width="0.55"/><path d="M166.40 -13.03 L5896.38 1593.40" fill="none" stroke="#d2d2d0" stroke-width="0.55"/><path d="M161.13 -12.08 L5575.41 1593.40" fill="none" stroke="#d2d2d0" stroke-width="0.55"/><path d="M155.62 -11.09 L5254.43 1593.40" fill="none" stroke="#d2d2d0" stroke-width="0.55"/><path d="M149.87 -10.05 L4933.46 1593.40" fill="none" stroke="#d2d2d0" stroke-width="0.55"/><path d="M143.84 -8.97 L4612.48 1593.40" fill="none" stroke="#d2d2d0" stroke-width="0.55"/><path d="M137.53 -7.83 L4291.51 1593.40" fill="none" stroke="#d2d2d0" stroke-width="0.55"/><path d="M130.91 -6.63 L3970.54 1593.40" fill="none" stroke="#d2d2d0" stroke-width="0.55"/><path d="M123.95 -5.38 L3649.56 1593.40" fill="none" stroke="#d2d2d0" stroke-width="0.55"/><path d="M116.64 -4.06 L3328.59 1593.40" fill="none" stroke="#d2d2d0" stroke-width="0.55"/><path d="M108.94 -2.67 L3007.61 1593.40" fill="none" stroke="#d2d2d0" stroke-width="0.55"/><path d="M100.82 -1.21 L2686.64 1593.40" fill="none" stroke="#d2d2d0" stroke-width="0.55"/><path d="M92.25 0.34 L2365.66 1593.40" fill="none" stroke="#d2d2d0" stroke-width="0.55"/><path d="M83.19 1.97 L2044.69 1593.40" fill="none" stroke="#d2d2d0" stroke-width="0.55"/><path d="M73.59 3.70 L1723.71 1593.40" fill="none" stroke="#d2d2d0" stroke-width="0.55"/><path d="M63.41 5.54 L1402.74 1593.40" fill="none" stroke="#d2d2d0" stroke-width="0.55"/><path d="M52.59 7.49 L1081.77 1593.40" fill="none" stroke="#d2d2d0" stroke-width="0.55"/><path d="M41.07 9.57 L760.79 1593.40" fill="none" stroke="#d2d2d0" stroke-width="0.55"/><path d="M28.77 11.79 L439.82 1593.40" fill="none" stroke="#d2d2d0" stroke-width="0.55"/><path d="M15.62 14.16 L118.84 1593.40" fill="none" stroke="#d2d2d0" stroke-width="0.55"/><path d="M1.53 16.70 L-202.13 1593.40" fill="none" stroke="#d2d2d0" stroke-width="0.55"/><path d="M-13.61 19.43 L-523.11 1593.40" fill="none" stroke="#d2d2d0" stroke-width="0.55"/><path d="M-29.92 22.37 L-844.08 1593.40" fill="none" stroke="#d2d2d0" stroke-width="0.55"/><path d="M-47.55 25.55 L-1165.06 1593.40" fill="none" stroke="#d2d2d0" stroke-width="0.55"/><path d="M-66.66 28.99 L-1486.03 1593.40" fill="none" stroke="#d2d2d0" stroke-width="0.55"/><path d="M-87.44 32.74 L-1807.01 1593.40" fill="none" stroke="#d2d2d0" stroke-width="0.55"/><path d="M-110.12 36.83 L-2127.98 1593.40" fill="none" stroke="#d2d2d0" stroke-width="0.55"/><path d="M-134.98 41.31 L-2448.95 1593.40" fill="none" stroke="#d2d2d0" stroke-width="0.55"/><path d="M-162.34 46.25 L-2769.93 1593.40" fill="none" stroke="#d2d2d0" stroke-width="0.55"/><path d="M-192.61 51.71 L-3090.90 1593.40" fill="none" stroke="#d2d2d0" stroke-width="0.55"/><path d="M-226.27 57.78 L-3411.88 1593.40" fill="none" stroke="#d2d2d0" stroke-width="0.55"/><path d="M-263.93 64.57 L-3732.85 1593.40" fill="none" stroke="#d2d2d0" stroke-width="0.55"/><path d="M-306.34 72.22 L-4053.83 1593.40" fill="none" stroke="#d2d2d0" stroke-width="0.55"/><path d="M-354.47 80.89 L-4374.80 1593.40" fill="none" stroke="#d2d2d0" stroke-width="0.55"/><path d="M-409.55 90.83 L-4695.78 1593.40" fill="none" stroke="#d2d2d0" stroke-width="0.55"/><path d="M-473.21 102.31 L-5016.75 1593.40" fill="none" stroke="#d2d2d0" stroke-width="0.55"/><path d="M-547.61 115.72 L-5337.72 1593.40" fill="none" stroke="#d2d2d0" stroke-width="0.55"/><path d="M-635.75 131.62 L-5658.70 1593.40" fill="none" stroke="#d2d2d0" stroke-width="0.55"/><path d="M-741.79 150.74 L-5979.67 1593.40" fill="none" stroke="#d2d2d0" stroke-width="0.55"/><path d="M-871.81 174.19 L-6300.65 1593.40" fill="none" stroke="#d2d2d0" stroke-width="0.55"/><path d="M-1034.99 203.61 L-6621.62 1593.40" fill="none" stroke="#d2d2d0" stroke-width="0.55"/><path d="M-1245.86 241.64 L-6942.60 1593.40" fill="none" stroke="#d2d2d0" stroke-width="0.55"/><path d="M-1528.92 292.68 L-7263.57 1593.40" fill="none" stroke="#d2d2d0" stroke-width="0.55"/><path d="M-1928.87 364.80 L-7584.55 1593.40" fill="none" stroke="#d2d2d0" stroke-width="0.55"/><path d="M-2536.96 474.46 L-7905.52 1593.40" fill="none" stroke="#d2d2d0" stroke-width="0.55"/><path d="M-3572.86 661.26 L-8226.50 1593.40" fill="none" stroke="#d2d2d0" stroke-width="0.55"/><path d="M228.52 -23.06 L-8421.03 1593.40" fill="none" stroke="#d2d2d0" stroke-width="0.55"/><path d="M232.15 -22.50 L-8100.05 1593.40" fill="none" stroke="#d2d2d0" stroke-width="0.55"/><path d="M235.91 -21.92 L-7779.08 1593.40" fill="none" stroke="#d2d2d0" stroke-width="0.55"/><path d="M239.80 -21.32 L-7458.10 1593.40" fill="none" stroke="#d2d2d0" stroke-width="0.55"/><path d="M243.82 -20.70 L-7137.13 1593.40" fill="none" stroke="#d2d2d0" stroke-width="0.55"/><path d="M247.99 -20.05 L-6816.15 1593.40" fill="none" stroke="#d2d2d0" stroke-width="0.55"/><path d="M252.31 -19.39 L-6495.18 1593.40" fill="none" stroke="#d2d2d0" stroke-width="0.55"/><path d="M256.80 -18.70 L-6174.20 1593.40" fill="none" stroke="#d2d2d0" stroke-width="0.55"/><path d="M261.45 -17.98 L-5853.23 1593.40" fill="none" stroke="#d2d2d0" stroke-width="0.55"/><path d="M266.28 -17.23 L-5532.25 1593.40" fill="none" stroke="#d2d2d0" stroke-width="0.55"/><path d="M271.30 -16.46 L-5211.28 1593.40" fill="none" stroke="#d2d2d0" stroke-width="0.55"/><path d="M276.52 -15.66 L-4890.31 1593.40" fill="none" stroke="#d2d2d0" stroke-width="0.55"/><path d="M281.96 -14.82 L-4569.33 1593.40" fill="none" stroke="#d2d2d0" stroke-width="0.55"/><path d="M287.62 -13.94 L-4248.36 1593.40" fill="none" stroke="#d2d2d0" stroke-width="0.55"/><path d="M293.53 -13.03 L-3927.38 1593.40" fill="none" stroke="#d2d2d0" stroke-width="0.55"/><path d="M299.69 -12.08 L-3606.41 1593.40" fill="none" stroke="#d2d2d0" stroke-width="0.55"/><path d="M306.13 -11.09 L-3285.43 1593.40" fill="none" stroke="#d2d2d0" stroke-width="0.55"/><path d="M312.86 -10.05 L-2964.46 1593.40" fill="none" stroke="#d2d2d0" stroke-width="0.55"/><path d="M319.90 -8.97 L-2643.48 1593.40" fill="none" stroke="#d2d2d0" stroke-width="0.55"/><path d="M327.29 -7.83 L-2322.51 1593.40" fill="none" stroke="#d2d2d0" stroke-width="0.55"/><path d="M335.03 -6.63 L-2001.54 1593.40" fill="none" stroke="#d2d2d0" stroke-width="0.55"/><path d="M343.16 -5.38 L-1680.56 1593.40" fill="none" stroke="#d2d2d0" stroke-width="0.55"/><path d="M351.72 -4.06 L-1359.59 1593.40" fill="none" stroke="#d2d2d0" stroke-width="0.55"/><path d="M360.72 -2.67 L-1038.61 1593.40" fill="none" stroke="#d2d2d0" stroke-width="0.55"/><path d="M370.21 -1.21 L-717.64 1593.40" fill="none" stroke="#d2d2d0" stroke-width="0.55"/><path d="M380.23 0.34 L-396.66 1593.40" fill="none" stroke="#d2d2d0" stroke-width="0.55"/><path d="M390.83 1.97 L-75.69 1593.40" fill="none" stroke="#d2d2d0" stroke-width="0.55"/><path d="M402.05 3.70 L245.29 1593.40" fill="none" stroke="#d2d2d0" stroke-width="0.55"/><path d="M413.96 5.54 L566.26 1593.40" fill="none" stroke="#d2d2d0" stroke-width="0.55"/><path d="M426.61 7.49 L887.23 1593.40" fill="none" stroke="#d2d2d0" stroke-width="0.55"/><path d="M440.09 9.57 L1208.21 1593.40" fill="none" stroke="#d2d2d0" stroke-width="0.55"/><path d="M454.47 11.79 L1529.18 1593.40" fill="none" stroke="#d2d2d0" stroke-width="0.55"/><path d="M469.84 14.16 L1850.16 1593.40" fill="none" stroke="#d2d2d0" stroke-width="0.55"/><path d="M486.32 16.70 L2171.13 1593.40" fill="none" stroke="#d2d2d0" stroke-width="0.55"/><path d="M504.03 19.43 L2492.11 1593.40" fill="none" stroke="#d2d2d0" stroke-width="0.55"/><path d="M523.11 22.37 L2813.08 1593.40" fill="none" stroke="#d2d2d0" stroke-width="0.55"/><path d="M543.72 25.55 L3134.06 1593.40" fill="none" stroke="#d2d2d0" stroke-width="0.55"/><path d="M566.07 28.99 L3455.03 1593.40" fill="none" stroke="#d2d2d0" stroke-width="0.55"/><path d="M590.36 32.74 L3776.01 1593.40" fill="none" stroke="#d2d2d0" stroke-width="0.55"/><path d="M616.89 36.83 L4096.98 1593.40" fill="none" stroke="#d2d2d0" stroke-width="0.55"/><path d="M645.96 41.31 L4417.95 1593.40" fill="none" stroke="#d2d2d0" stroke-width="0.55"/><path d="M677.96 46.25 L4738.93 1593.40" fill="none" stroke="#d2d2d0" stroke-width="0.55"/><path d="M713.35 51.71 L5059.90 1593.40" fill="none" stroke="#d2d2d0" stroke-width="0.55"/><path d="M752.72 57.78 L5380.88 1593.40" fill="none" stroke="#d2d2d0" stroke-width="0.55"/><path d="M796.75 64.57 L5701.85 1593.40" fill="none" stroke="#d2d2d0" stroke-width="0.55"/><path d="M846.35 72.22 L6022.83 1593.40" fill="none" stroke="#d2d2d0" stroke-width="0.55"/><path d="M902.63 80.89 L6343.80 1593.40" fill="none" stroke="#d2d2d0" stroke-width="0.55"/><path d="M967.04 90.83 L6664.78 1593.40" fill="none" stroke="#d2d2d0" stroke-width="0.55"/><path d="M1041.48 102.31 L6985.75 1593.40" fill="none" stroke="#d2d2d0" stroke-width="0.55"/><path d="M1128.49 115.72 L7306.72 1593.40" fill="none" stroke="#d2d2d0" stroke-width="0.55"/><path d="M1231.56 131.62 L7627.70 1593.40" fill="none" stroke="#d2d2d0" stroke-width="0.55"/><path d="M1355.56 150.74 L7948.67 1593.40" fill="none" stroke="#d2d2d0" stroke-width="0.55"/><path d="M1507.61 174.19 L8269.65 1593.40" fill="none" stroke="#d2d2d0" stroke-width="0.55"/><path d="M1698.43 203.61 L8590.62 1593.40" fill="none" stroke="#d2d2d0" stroke-width="0.55"/><path d="M1945.03 241.64 L8911.60 1593.40" fill="none" stroke="#d2d2d0" stroke-width="0.55"/><path d="M2276.03 292.68 L9232.57 1593.40" fill="none" stroke="#d2d2d0" stroke-width="0.55"/><path d="M2743.73 364.80 L9553.55 1593.40" fill="none" stroke="#d2d2d0" stroke-width="0.55"/><path d="M3454.84 474.46 L9874.52 1593.40" fill="none" stroke="#d2d2d0" stroke-width="0.55"/><path d="M4666.21 661.26 L10195.50 1593.40" fill="none" stroke="#d2d2d0" stroke-width="0.55"/><path d="M0 0 L95.49 0 L0 17.40Z" fill="#c9c9c9"/><path d="M375.44 0 L494 0 L494 18.60Z" fill="#c9c9c9"/><path d="M95.49 0 L0 17.40 M375.44 0 L494 18.60" stroke="#6a6a6a" stroke-width="0.7" stroke-dasharray="0.8 0.8" fill="none"/></svg>
<svg class="a" style="left:205px;top:50px;" width="17" height="16" viewBox="0 0 17 16"><path d="M8.6 13.8 V1.6" stroke="#6a72e0" stroke-width="0.8"/><path d="M8.6 13.8 L2.2 10.9" stroke="#4ac84a" stroke-width="0.8"/><path d="M8.6 13.8 L14.4 10.3" stroke="#f08a60" stroke-width="0.8"/></svg>
<svg class="a" style="left:200px;top:68.5px;" width="8" height="7" viewBox="0 0 8 7"><path d="M0.3 1.4 V0.3 H1.4 M5 0.3 H6.1 V1.4 M6.1 4 V5.1 H5 M1.4 5.1 H0.3 V4" stroke="#4ccc3c" stroke-width="1" fill="none"/></svg>
<svg class="a" style="left:200px;top:77.8px;" width="8" height="7" viewBox="0 0 8 7"><path d="M0.3 1.4 V0.3 H1.4 M5 0.3 H6.1 V1.4 M6.1 4 V5.1 H5 M1.4 5.1 H0.3 V4" stroke="#555" stroke-width="1" fill="none"/></svg>
<div class="a" style="left:199.00px;top:86.00px;width:8.00px;height:0.50px;background:#c8c8c8;"></div>
<svg class="a" style="left:199px;top:89.7px;" width="8" height="9" viewBox="0 0 8 9"><rect x="0" y="0" width="7" height="7.2" fill="#7eaed0"/><rect x="1" y="1" width="5" height="5.2" fill="#b4d0e0"/><path d="M1 5 L3 3 L4.5 4.5 L6 3.5 V6.2 H1Z" fill="#8ab0c8"/></svg>
<div class="a" style="left:199.00px;top:98.80px;width:8.00px;height:0.50px;background:#c8c8c8;"></div>
<svg class="a" style="left:199.5px;top:100.6px;" width="7" height="7" viewBox="0 0 7 7"><path d="M3 0.5 A2.6 2.6 0 1 0 5.6 3" fill="none" stroke="#888" stroke-width="0.8"/><path d="M3 0.5 L4.5 1.8" stroke="#888" stroke-width="0.7"/></svg>
<div class="a" style="left:199.00px;top:108.80px;width:8.00px;height:0.50px;background:#c8c8c8;"></div>
<svg class="a" style="left:198px;top:111.4px;" width="8" height="7" viewBox="0 0 8 7"><rect x="0.5" y="1.5" width="5" height="4" fill="#f0c890" stroke="#d08030" stroke-width="0.7"/><path d="M0.5 1.5 L2 0.3 H6 L5.5 1.5" fill="#f8e0b0" stroke="#d08030" stroke-width="0.5"/></svg>
<svg class="a" style="left:205.6px;top:113.8px;" width="3" height="3" viewBox="0 0 3 3"><path d="M0 0 H1.8 L0.9 1.4Z" fill="#444"/></svg>
<svg class="a" style="left:198px;top:118.8px;" width="8" height="7" viewBox="0 0 8 7"><rect x="0" y="0" width="6.6" height="5.6" fill="#7eaed0"/><rect x="1" y="1" width="4.6" height="3.6" fill="#b4d0e0"/></svg>
<svg class="a" style="left:205.6px;top:121px;" width="3" height="3" viewBox="0 0 3 3"><path d="M0 0 H1.8 L0.9 1.4Z" fill="#444"/></svg>
<svg class="a" style="left:198px;top:127px;" width="8" height="7" viewBox="0 0 8 7"><rect x="0.5" y="0.5" width="5" height="4.6" fill="#e8b080" stroke="#c07030" stroke-width="0.6"/></svg>
<svg class="a" style="left:198px;top:139.6px;" width="8" height="7" viewBox="0 0 8 7"><circle cx="3" cy="3" r="2.4" fill="none" stroke="#888" stroke-width="0.7"/></svg>
<svg class="a" style="left:198px;top:150px;" width="9" height="7" viewBox="0 0 9 7"><circle cx="2" cy="3" r="1.6" fill="#e05030"/><circle cx="4.4" cy="3" r="1.6" fill="#30a040"/><circle cx="3.2" cy="1.4" r="1.4" fill="#3070d0"/></svg>
<svg class="a" style="left:201px;top:126.3px;" width="40" height="40" viewBox="0 0 40 40"><g>
<path d="M0 0 H39 L29.5 9.7 H10 Z" fill="#7c7c7c"/>
<path d="M39 0 V38.7 L29.5 28.9 V9.7Z" fill="#7c7c7c"/>
<path d="M0 38.7 H39 L29.5 28.9 H10Z" fill="#7c7c7c"/>
<path d="M0 0 V38.7 L10 28.9 V9.7Z" fill="#7c7c7c" fill-opacity="0.55"/>
<rect x="10" y="9.7" width="19.5" height="19.2" fill="#777"/>
<path d="M0.5 0.5 H38.5 V38.2 H0.5Z M10 9.7 H29.5 V28.9 H10Z M0.5 0.5 L10 9.7 M38.5 0.5 L29.5 9.7 M38.5 38.2 L29.5 28.9 M0.5 38.2 L10 28.9" fill="none" stroke="#f2f2f2" stroke-width="1.1"/>
<circle cx="11" cy="28.2" r="1.6" fill="#3ab8f0"/>
</g></svg>
<div class="a t" style="left:215.5px;top:128.3px;width:10px;text-align:center;font-size:6.6px;line-height:6px;color:#f4f4f4;text-shadow:0 0 0.3px #fff">B</div>
<div class="a t" style="left:215.5px;top:142.6px;width:10px;text-align:center;font-size:6.6px;line-height:6px;color:#f4f4f4;text-shadow:0 0 0.3px #fff">T</div>
<div class="a t" style="left:201px;top:142.6px;width:10px;text-align:center;font-size:6.6px;line-height:6px;color:#f4f4f4;text-shadow:0 0 0.3px #fff">L</div>
<div class="a t" style="left:230px;top:142.6px;width:10px;text-align:center;font-size:6.6px;line-height:6px;color:#f4f4f4;text-shadow:0 0 0.3px #fff">R</div>
<div class="a t" style="left:215.5px;top:157.3px;width:10px;text-align:center;font-size:6.6px;line-height:6px;color:#f4f4f4;text-shadow:0 0 0.3px #fff">F</div>
<svg class="a" style="left:410px;top:112px;" width="32" height="36" viewBox="0 0 32 36"><path d="M15.8 0.6 L29.6 8.8 L14.6 17.1 L1 9.3Z" fill="#3c5b8c"/>
<path d="M1 9.3 L14.6 17.1 L15.8 33.8 L1.8 24.5Z" fill="#4a6ea6"/>
<path d="M14.6 17.1 L29.6 8.8 L29.8 25 L15.8 33.8Z" fill="#4d71aa"/>
<path d="M15.8 0.6 L29.6 8.8 L29.8 25 L15.8 33.8 L1.8 24.5 L1 9.3Z M1 9.3 L14.6 17.1 L29.6 8.8 M14.6 17.1 L15.8 33.8" fill="none" stroke="#22385a" stroke-width="0.6"/></svg>
<svg class="a" style="left:400.2px;top:135.6px;" width="6" height="8" viewBox="0 0 6 8"><path d="M0.4 0.4 L4.4 4 L2.6 4.2 L3.4 6 L2.6 6.2 L1.8 4.6 L0.6 5.6Z" fill="#b8f018" stroke="#4a6a10" stroke-width="0.4"/></svg>
<div class="a" style="left:357.80px;top:51.20px;width:169.00px;height:14.70px;background:#9c9c9c;"></div>
<svg class="a" style="left:364px;top:55.6px;" width="6" height="7" viewBox="0 0 6 7"><circle cx="2.5" cy="2.6" r="1.6" fill="none" stroke="#f4f4f4" stroke-width="0.9"/><path d="M2.5 0.2 V1 M2.5 4.2 V5 M0.1 2.6 H0.9 M4.1 2.6 H4.9" stroke="#f4f4f4" stroke-width="0.8"/></svg>
<div class="a" style="left:366.00px;top:63.10px;width:1.20px;height:1.20px;background:#ffffff;border-radius:1px;"></div>
<svg class="a" style="left:374px;top:54px;" width="12" height="12" viewBox="0 0 12 12"><circle cx="5.3" cy="5.3" r="4.7" fill="none" stroke="#e8e8e8" stroke-width="0.8"/><path d="M3 3.2 V7.4 M7.6 3.2 V7.4 M3.4 5.3 L5.3 3.4 V7.2Z M7.2 5.3 L5.3 3.4 V7.2Z" stroke="#e8e8e8" stroke-width="0.6" fill="#e8e8e8"/></svg>
<svg class="a" style="left:387px;top:54px;" width="12" height="12" viewBox="0 0 12 12"><circle cx="5.3" cy="5.3" r="4.7" fill="none" stroke="#a4b8c8" stroke-width="0.7"/><path d="M4.2 3.2 V7.4 M6.4 3.2 V7.4" stroke="#a4b8c8" stroke-width="0.9"/></svg>
<div class="a t" style="left:400.50px;top:55.70px;font-size:7.2px;line-height:7.2px;color:#a4b4c2;transform:scaleX(0.977);transform-origin:0 0;text-shadow:none;">0:00:02</div>
<svg class="a" style="left:438.6px;top:57.8px;" width="3" height="4" viewBox="0 0 3 4"><path d="M1.8 0 L0 1.3 L1.8 2.6Z" fill="#a8c4dc"/></svg>
<div class="a t" style="left:443.40px;top:56.60px;font-size:5.4px;line-height:5.4px;color:#a6bdd0;transform:scaleX(0.919);transform-origin:0 0;text-shadow:none;">1.0</div>
<svg class="a" style="left:461.5px;top:55.8px;" width="4" height="5" viewBox="0 0 4 5"><path d="M2.4 0.6 L0.6 2 L2.4 3.4" fill="none" stroke="#a8c4dc" stroke-width="0.6"/></svg>
<div class="a" style="left:463.50px;top:58.30px;width:16.50px;height:0.70px;background:#a8c4dc;"></div>
<div class="a" style="left:480.00px;top:58.30px;width:12.00px;height:0.70px;background:#f0f0f0;"></div>
<div class="a" style="left:479.80px;top:56.40px;width:0.80px;height:4.20px;background:#f0f0f0;"></div>
<svg class="a" style="left:492.6px;top:55.8px;" width="4" height="5" viewBox="0 0 4 5"><path d="M0.6 0.6 L2.4 2 L0.6 3.4" fill="none" stroke="#a8c4dc" stroke-width="0.6"/></svg>
<svg class="a" style="left:500px;top:55.4px;" width="6" height="8" viewBox="0 0 6 8"><path d="M0.4 0.4 H3 L4.6 2 V5.8 H0.4Z M3 0.4 V2 H4.6" fill="none" stroke="#f0f0f0" stroke-width="0.7"/></svg>
<svg class="a" style="left:506.8px;top:56.4px;" width="8" height="6" viewBox="0 0 8 6"><rect x="0.2" y="0.6" width="4.6" height="3.8" fill="#f0f0f0"/><path d="M4.8 2.5 L6.8 1 V4Z" fill="#f0f0f0"/></svg>
<svg class="a" style="left:515.8px;top:55.6px;" width="7" height="7" viewBox="0 0 7 7"><path d="M0.4 0.8 L2.8 5.4 L5.4 0.8" fill="none" stroke="#f0f0f0" stroke-width="1.1"/><circle cx="5" cy="0.8" r="0.8" fill="#f0f0f0"/></svg>
<div class="a t" style="left:198.70px;top:174.70px;font-size:7.0px;line-height:7.0px;color:#e4e4e4;transform:scaleX(0.871);transform-origin:0 0;">Output</div>
<svg class="a" style="left:259px;top:175.2px;" width="5" height="7" viewBox="0 0 5 7"><path d="M0.9 0.4 H3.1 M1.3 0.4 V2.6 H2.7 V0.4 M0.3 2.8 H3.7 M2 2.8 V5.6" stroke="#d8d8d8" stroke-width="0.8" fill="none"/></svg>
<svg class="a" style="left:269.5px;top:176px;" width="6" height="6" viewBox="0 0 6 6"><path d="M0.4 0.4 L4.0 4.4 M4.0 0.4 L0.4 4.4" stroke="#e8e8e8" stroke-width="1"/></svg>
<div class="a t" style="left:285.00px;top:174.70px;font-size:7.0px;line-height:7.0px;color:#e4e4e4;transform:scaleX(0.807);transform-origin:0 0;">Connected Variables</div>
<svg class="a" style="left:668.3px;top:175.2px;" width="5" height="7" viewBox="0 0 5 7"><path d="M0.9 0.4 H3.1 M1.3 0.4 V2.6 H2.7 V0.4 M0.3 2.8 H3.7 M2 2.8 V5.6" stroke="#d8d8d8" stroke-width="0.8" fill="none"/></svg>
<svg class="a" style="left:679px;top:176px;" width="6" height="6" viewBox="0 0 6 6"><path d="M0.4 0.4 L4.0 4.4 M4.0 0.4 L0.4 4.4" stroke="#e8e8e8" stroke-width="1"/></svg>
<div class="a" style="left:284.30px;top:185.20px;width:400.30px;height:87.20px;background:#272727;border:0.8px solid #3e3e3e;border-bottom:1.4px solid #3e3e3e;box-sizing:border-box;"></div>
<div class="a" style="left:284.30px;top:185.20px;width:400.30px;height:10.00px;background:#2b2b2b;border:0.8px solid #3e3e3e;box-sizing:border-box;"></div>
<div class="a" style="left:284.30px;top:194.60px;width:400.30px;height:0.80px;background:#3e3e3e;"></div>
<div class="a" style="left:284.30px;top:204.20px;width:400.30px;height:0.80px;background:#3e3e3e;"></div>
<div class="a" style="left:343.60px;top:185.20px;width:0.80px;height:51.10px;background:#3e3e3e;"></div>
<div class="a" style="left:433.90px;top:185.20px;width:0.80px;height:51.10px;background:#3e3e3e;"></div>
<div class="a" style="left:444.30px;top:185.20px;width:0.80px;height:51.10px;background:#3e3e3e;"></div>
<div class="a" style="left:473.20px;top:185.20px;width:0.80px;height:51.10px;background:#3e3e3e;"></div>
<div class="a" style="left:501.40px;top:185.20px;width:0.80px;height:51.10px;background:#3e3e3e;"></div>
<div class="a" style="left:530.50px;top:185.20px;width:0.80px;height:51.10px;background:#3e3e3e;"></div>
<div class="a" style="left:540.20px;top:185.20px;width:0.80px;height:51.10px;background:#3e3e3e;"></div>
<div class="a" style="left:648.50px;top:185.20px;width:0.80px;height:51.10px;background:#3e3e3e;"></div>
<div class="a t" style="left:288.00px;top:189.00px;font-size:5.4px;line-height:5.4px;color:#8c8c8c;transform:scaleX(0.794);transform-origin:0 0;">Structure</div>
<div class="a t" style="left:347.00px;top:189.00px;font-size:5.4px;line-height:5.4px;color:#8c8c8c;transform:scaleX(0.800);transform-origin:0 0;">Simulation variable</div>
<div class="a t" style="left:437.00px;top:189.00px;font-size:5.4px;line-height:5.4px;color:#8c8c8c;transform:scaleX(0.781);transform-origin:0 0;">...</div>
<div class="a t" style="left:447.80px;top:189.00px;font-size:5.4px;line-height:5.4px;color:#8c8c8c;transform:scaleX(0.810);transform-origin:0 0;">Simulati...</div>
<div class="a t" style="left:476.90px;top:189.00px;font-size:5.4px;line-height:5.4px;color:#8c8c8c;transform:scaleX(0.767);transform-origin:0 0;">Prepared...</div>
<div class="a t" style="left:505.70px;top:189.00px;font-size:5.4px;line-height:5.4px;color:#8c8c8c;transform:scaleX(0.769);transform-origin:0 0;">Latest va...</div>
<div class="a t" style="left:535.00px;top:189.00px;font-size:5.4px;line-height:5.4px;color:#8c8c8c;transform:scaleX(0.781);transform-origin:0 0;">...</div>
<div class="a t" style="left:545.00px;top:189.00px;font-size:5.4px;line-height:5.4px;color:#8c8c8c;transform:scaleX(0.772);transform-origin:0 0;">Server variable</div>
<div class="a t" style="left:652.30px;top:189.00px;font-size:5.4px;line-height:5.4px;color:#8c8c8c;transform:scaleX(0.786);transform-origin:0 0;">Server type</div>
<svg class="a" style="left:288px;top:198.29999999999998px;" width="6" height="6" viewBox="0 0 6 6"><rect x="0.3" y="0.3" width="4.4" height="4.4" fill="#1a1a1a"/><path d="M1 1 L4 4 M4 1 L1 4" stroke="#000" stroke-width="1.3"/></svg>
<svg class="a" style="left:347px;top:198.29999999999998px;" width="6" height="6" viewBox="0 0 6 6"><rect x="0.3" y="0.3" width="4.4" height="4.4" fill="#1a1a1a"/><path d="M1 1 L4 4 M4 1 L1 4" stroke="#000" stroke-width="1.3"/></svg>
<svg class="a" style="left:436.5px;top:198.29999999999998px;" width="6" height="6" viewBox="0 0 6 6"><rect x="0.3" y="0.3" width="4.4" height="4.4" fill="#1a1a1a"/><path d="M1 1 L4 4 M4 1 L1 4" stroke="#000" stroke-width="1.3"/></svg>
<svg class="a" style="left:447.8px;top:198.29999999999998px;" width="6" height="6" viewBox="0 0 6 6"><rect x="0.3" y="0.3" width="4.4" height="4.4" fill="#1a1a1a"/><path d="M1 1 L4 4 M4 1 L1 4" stroke="#000" stroke-width="1.3"/></svg>
<svg class="a" style="left:476.9px;top:198.29999999999998px;" width="6" height="6" viewBox="0 0 6 6"><rect x="0.3" y="0.3" width="4.4" height="4.4" fill="#1a1a1a"/><path d="M1 1 L4 4 M4 1 L1 4" stroke="#000" stroke-width="1.3"/></svg>
<svg class="a" style="left:505px;top:198.29999999999998px;" width="6" height="6" viewBox="0 0 6 6"><rect x="0.3" y="0.3" width="4.4" height="4.4" fill="#1a1a1a"/><path d="M1 1 L4 4 M4 1 L1 4" stroke="#000" stroke-width="1.3"/></svg>
<svg class="a" style="left:534px;top:198.29999999999998px;" width="6" height="6" viewBox="0 0 6 6"><rect x="0.3" y="0.3" width="4.4" height="4.4" fill="#1a1a1a"/><path d="M1 1 L4 4 M4 1 L1 4" stroke="#000" stroke-width="1.3"/></svg>
<svg class="a" style="left:544.3px;top:198.29999999999998px;" width="6" height="6" viewBox="0 0 6 6"><rect x="0.3" y="0.3" width="4.4" height="4.4" fill="#1a1a1a"/><path d="M1 1 L4 4 M4 1 L1 4" stroke="#000" stroke-width="1.3"/></svg>
<svg class="a" style="left:652.3px;top:198.29999999999998px;" width="6" height="6" viewBox="0 0 6 6"><rect x="0.3" y="0.3" width="4.4" height="4.4" fill="#1a1a1a"/><path d="M1 1 L4 4 M4 1 L1 4" stroke="#000" stroke-width="1.3"/></svg>
<svg class="a" style="left:330px;top:198.20000000000002px;" width="12" height="6" viewBox="0 0 12 6"><path d="M0 1.6 H2 L1 2.8Z" fill="#a0a0a0"/><path d="M4.2 0.5 H7.2 M5.7 0.5 V4.4" stroke="#6a6a6a" stroke-width="0.7"/><path d="M7.4 2.8 L9.6 4.8 M9.6 2.8 L7.4 4.8" stroke="#5e5e5e" stroke-width="0.6"/></svg>
<svg class="a" style="left:419px;top:198.20000000000002px;" width="12" height="6" viewBox="0 0 12 6"><path d="M0 1.6 H2 L1 2.8Z" fill="#a0a0a0"/><path d="M4.2 0.5 H7.2 M5.7 0.5 V4.4" stroke="#6a6a6a" stroke-width="0.7"/><path d="M7.4 2.8 L9.6 4.8 M9.6 2.8 L7.4 4.8" stroke="#5e5e5e" stroke-width="0.6"/></svg>
<svg class="a" style="left:459px;top:198.20000000000002px;" width="12" height="6" viewBox="0 0 12 6"><path d="M0 1.6 H2 L1 2.8Z" fill="#a0a0a0"/><path d="M4.2 0.5 H7.2 M5.7 0.5 V4.4" stroke="#6a6a6a" stroke-width="0.7"/><path d="M7.4 2.8 L9.6 4.8 M9.6 2.8 L7.4 4.8" stroke="#5e5e5e" stroke-width="0.6"/></svg>
<svg class="a" style="left:487.8px;top:198.20000000000002px;" width="12" height="6" viewBox="0 0 12 6"><path d="M0 1.6 H2 L1 2.8Z" fill="#a0a0a0"/><path d="M4.2 0.5 H7.2 M5.7 0.5 V4.4" stroke="#6a6a6a" stroke-width="0.7"/><path d="M7.4 2.8 L9.6 4.8 M9.6 2.8 L7.4 4.8" stroke="#5e5e5e" stroke-width="0.6"/></svg>
<svg class="a" style="left:516.5px;top:198.20000000000002px;" width="12" height="6" viewBox="0 0 12 6"><path d="M0 1.6 H2 L1 2.8Z" fill="#a0a0a0"/><path d="M4.2 0.5 H7.2 M5.7 0.5 V4.4" stroke="#6a6a6a" stroke-width="0.7"/><path d="M7.4 2.8 L9.6 4.8 M9.6 2.8 L7.4 4.8" stroke="#5e5e5e" stroke-width="0.6"/></svg>
<svg class="a" style="left:634.4px;top:198.20000000000002px;" width="12" height="6" viewBox="0 0 12 6"><path d="M0 1.6 H2 L1 2.8Z" fill="#a0a0a0"/><path d="M4.2 0.5 H7.2 M5.7 0.5 V4.4" stroke="#6a6a6a" stroke-width="0.7"/><path d="M7.4 2.8 L9.6 4.8 M9.6 2.8 L7.4 4.8" stroke="#5e5e5e" stroke-width="0.6"/></svg>
<svg class="a" style="left:671px;top:198.20000000000002px;" width="12" height="6" viewBox="0 0 12 6"><path d="M0 1.6 H2 L1 2.8Z" fill="#a0a0a0"/><path d="M4.2 0.5 H7.2 M5.7 0.5 V4.4" stroke="#6a6a6a" stroke-width="0.7"/><path d="M7.4 2.8 L9.6 4.8 M9.6 2.8 L7.4 4.8" stroke="#5e5e5e" stroke-width="0.6"/></svg>
<div class="a" style="left:286.00px;top:208.60px;width:3.00px;height:0.90px;background:#e8e8e8;"></div>
<svg class="a" style="left:291.9px;top:206px;" width="7" height="7" viewBox="0 0 7 7"><rect x="0.2" y="0.2" width="5.6" height="5.2" fill="#e8e8e8"/><path d="M0.2 2 H5.8 M0.2 3.6 H5.8 M2 0.2 V5.4 M3.9 0.2 V5.4" stroke="#777" stroke-width="0.4"/></svg>
<div class="a t" style="left:299.60px;top:206.95px;font-size:5.5px;line-height:5.5px;color:#e2e2e2;transform:scaleX(0.715);transform-origin:0 0;">Server</div>
<div class="a" style="left:290.00px;top:211.60px;width:0.60px;height:13.00px;background:#5a5a5a;"></div>
<div class="a" style="left:290.00px;top:216.80px;width:4.50px;height:0.60px;background:#5a5a5a;"></div>
<svg class="a" style="left:296px;top:214.5px;" width="7" height="6" viewBox="0 0 7 6"><rect x="0.2" y="0.2" width="5.2" height="4.6" fill="#d8d8d8"/><path d="M0.2 1.8 H5.4 M0.2 3.3 H5.4 M2 0.2 V4.8 M3.7 0.2 V4.8" stroke="#6a6a6a" stroke-width="0.4"/></svg>
<div class="a t" style="left:303.20px;top:214.95px;font-size:5.5px;line-height:5.5px;color:#e2e2e2;transform:scaleX(0.790);transform-origin:0 0;">Simulation to server</div>
<div class="a" style="left:289.40px;top:224.50px;width:3.40px;height:0.90px;background:#e8e8e8;"></div>
<svg class="a" style="left:296px;top:222.1px;" width="7" height="6" viewBox="0 0 7 6"><rect x="0.2" y="0.2" width="5.2" height="4.6" fill="#d8d8d8"/><path d="M0.2 1.8 H5.4 M0.2 3.3 H5.4 M2 0.2 V4.8 M3.7 0.2 V4.8" stroke="#6a6a6a" stroke-width="0.4"/></svg>
<div class="a t" style="left:303.20px;top:222.55px;font-size:5.5px;line-height:5.5px;color:#e2e2e2;transform:scaleX(0.790);transform-origin:0 0;">Server to simulation</div>
<div class="a" style="left:285.10px;top:228.70px;width:398.70px;height:7.60px;background:#1f4b62;"></div>
<div class="a" style="left:298.00px;top:227.00px;width:0.60px;height:5.00px;background:#5a5a5a;"></div>
<div class="a" style="left:298.00px;top:231.80px;width:3.40px;height:0.60px;background:#5a5a5a;"></div>
<div class="a t" style="left:301.00px;top:230.25px;font-size:5.5px;line-height:5.5px;color:#f0f0f0;transform:scaleX(0.678);transform-origin:0 0;">Pos_X</div>
<div class="a t" style="left:346.00px;top:230.25px;font-size:5.5px;line-height:5.5px;color:#e0402c;transform:scaleX(0.736);transform-origin:0 0;">Block_Component\</div>
<div class="a t" style="left:381.00px;top:230.25px;font-size:5.5px;line-height:5.5px;color:#30c030;transform:scaleX(0.678);transform-origin:0 0;">Pos_X</div>
<svg class="a" style="left:435.3px;top:229.4px;" width="7" height="7" viewBox="0 0 7 7"><path d="M2.6 0 L0.3 3 H1.8 L1.2 5.6 L3.8 2.4 H2.2Z" fill="#f0b000"/><path d="M4.2 3.6 V5.4" stroke="#7ab0e0" stroke-width="0.6"/></svg>
<div class="a t" style="left:447.00px;top:230.30px;font-size:5.4px;line-height:5.4px;color:#e2e2e2;transform:scaleX(0.726);transform-origin:0 0;">1935</div>
<div class="a t" style="left:504.70px;top:230.30px;font-size:5.4px;line-height:5.4px;color:#e2e2e2;transform:scaleX(0.726);transform-origin:0 0;">1935</div>
<svg class="a" style="left:533px;top:229.6px;" width="7" height="7" viewBox="0 0 7 7"><circle cx="3" cy="3" r="2.5" fill="none" stroke="#2fb82f" stroke-width="0.7"/><path d="M1.6 3 L2.7 4 L4.5 2" fill="none" stroke="#2fb82f" stroke-width="0.8"/></svg>
<div class="a t" style="left:545.00px;top:230.25px;font-size:5.5px;line-height:5.5px;color:#e2e2e2;transform:scaleX(0.639);transform-origin:0 0;">PP_Pos_X</div>
<div class="a t" style="left:652.30px;top:230.25px;font-size:5.5px;line-height:5.5px;color:#e2e2e2;transform:scaleX(0.772);transform-origin:0 0;">Integer</div>
<div class="a t" style="left:286.90px;top:274.70px;font-size:5.2px;line-height:5.2px;color:#e8e8e8;transform:scaleX(0.837);transform-origin:0 0;font-weight:bold;">Average update time:</div>
<div class="a t" style="left:334.50px;top:274.80px;font-size:5.0px;line-height:5.0px;color:#c8c8c8;transform:scaleX(0.813);transform-origin:0 0;">6.6 ms</div>
<div class="a t" style="left:355.80px;top:274.70px;font-size:5.2px;line-height:5.2px;color:#e8e8e8;transform:scaleX(0.843);transform-origin:0 0;font-weight:bold;">Max update time:</div>
<div class="a t" style="left:395.70px;top:274.80px;font-size:5.0px;line-height:5.0px;color:#c8c8c8;transform:scaleX(0.820);transform-origin:0 0;">6.6 ms</div>
<div class="a t" style="left:417.20px;top:274.70px;font-size:5.2px;line-height:5.2px;color:#e8e8e8;transform:scaleX(0.819);transform-origin:0 0;font-weight:bold;">Pairs with errors:</div>
<div class="a t" style="left:457.00px;top:274.80px;font-size:5.0px;line-height:5.0px;color:#c8c8c8;transform:scaleX(0.929);transform-origin:0 0;">0</div>
<div class="a t" style="left:286.90px;top:282.40px;font-size:5.2px;line-height:5.2px;color:#e8e8e8;transform:scaleX(0.841);transform-origin:0 0;font-weight:bold;">Average plugin time:</div>
<div class="a t" style="left:335.00px;top:282.50px;font-size:5.0px;line-height:5.0px;color:#c8c8c8;transform:scaleX(0.896);transform-origin:0 0;">--</div>
<div class="a t" style="left:355.80px;top:282.40px;font-size:5.2px;line-height:5.2px;color:#e8e8e8;transform:scaleX(0.838);transform-origin:0 0;font-weight:bold;">Max plugin time:</div>
<div class="a t" style="left:395.70px;top:282.50px;font-size:5.0px;line-height:5.0px;color:#c8c8c8;transform:scaleX(0.985);transform-origin:0 0;">--</div>
<div class="a t" style="left:417.20px;top:282.40px;font-size:5.2px;line-height:5.2px;color:#e8e8e8;transform:scaleX(0.795);transform-origin:0 0;font-weight:bold;">Errors on this run:</div>
<div class="a t" style="left:457.00px;top:282.50px;font-size:5.0px;line-height:5.0px;color:#c8c8c8;transform:scaleX(0.929);transform-origin:0 0;">0</div>
<svg class="a" style="left:642.6px;top:277.2px;" width="10" height="10" viewBox="0 0 10 10"><rect x="0.5" y="0.5" width="7" height="7.8" rx="0.8" fill="#3a3a3a" stroke="#e0e0e0" stroke-width="0.8"/><path d="M1.8 2 H6 M1.8 3.4 H4" stroke="#b0b0b0" stroke-width="0.6"/><path d="M2.6 5.4 L4.2 7 L8.2 3.2" fill="none" stroke="#30d030" stroke-width="1.2"/></svg>
<svg class="a" style="left:654.8px;top:278px;" width="10" height="9" viewBox="0 0 10 9"><path d="M0.5 0.8 H7.6 M0.5 2.6 H7.6 M0.5 4.4 H7.6 M0.5 6.2 H5" stroke="#7a7a7a" stroke-width="0.9"/><path d="M6.4 5.6 L8 7.2" stroke="#7a7a7a" stroke-width="0.8"/></svg>
<svg class="a" style="left:667.4px;top:278px;" width="8" height="9" viewBox="0 0 8 9"><path d="M0.4 1.2 H6.4 M2.4 1 V0.3 H4.4 V1" stroke="#6e6e6e" stroke-width="0.7" fill="none"/><rect x="1" y="2" width="4.8" height="5.6" fill="#6e6e6e"/><path d="M2.4 2.6 V7 M3.4 2.6 V7 M4.4 2.6 V7" stroke="#555" stroke-width="0.4"/></svg>
<svg class="a" style="left:678.3px;top:278px;" width="9" height="9" viewBox="0 0 9 9"><path d="M6.8 3.8 A3 3 0 1 1 5.6 1.4" fill="none" stroke="#7a7a7a" stroke-width="0.8"/><circle cx="3.8" cy="3.8" r="1" fill="#7a7a7a"/></svg>
<div class="a t" style="left:3.10px;top:295.40px;font-size:7.4px;line-height:7.4px;color:#e4e4e4;transform:scaleX(0.748);transform-origin:0 0;">Create Variable Pairs</div>
<svg class="a" style="left:668px;top:295px;" width="5" height="7" viewBox="0 0 5 7"><path d="M0.9 0.4 H3.1 M1.3 0.4 V2.6 H2.7 V0.4 M0.3 2.8 H3.7 M2 2.8 V5.6" stroke="#d8d8d8" stroke-width="0.8" fill="none"/></svg>
<svg class="a" style="left:679px;top:295.8px;" width="6" height="6" viewBox="0 0 6 6"><path d="M0.4 0.4 L4.0 4.4 M4.0 0.4 L0.4 4.4" stroke="#e8e8e8" stroke-width="1"/></svg>
<div class="a t" style="left:2.00px;top:307.20px;font-size:4.8px;line-height:4.8px;color:#e8e8e8;transform:scaleX(0.887);transform-origin:0 0;font-weight:bold;">Include:</div>
<svg class="a" style="left:2px;top:314.2px;" width="8" height="8" viewBox="0 0 8 8"><rect x="0.4" y="0.4" width="5.4" height="5.6" fill="none" stroke="#c8c8c8" stroke-width="0.75"/></svg>
<div class="a t" style="left:9.60px;top:315.40px;font-size:5.4px;line-height:5.4px;color:#e2e2e2;transform:scaleX(0.792);transform-origin:0 0;">Only selected components</div>
<svg class="a" style="left:2px;top:322.6px;" width="8" height="8" viewBox="0 0 8 8"><rect x="0.4" y="0.4" width="5.4" height="5.6" fill="none" stroke="#c8c8c8" stroke-width="0.75"/><path d="M1.2 3.1 L2.6 4.6 L5 1.3" fill="none" stroke="#ffffff" stroke-width="1.1"/></svg>
<div class="a t" style="left:9.60px;top:323.80px;font-size:5.4px;line-height:5.4px;color:#e2e2e2;transform:scaleX(0.813);transform-origin:0 0;">Component properties</div>
<svg class="a" style="left:56.5px;top:322.6px;" width="8" height="8" viewBox="0 0 8 8"><rect x="0.4" y="0.4" width="5.4" height="5.6" fill="none" stroke="#c8c8c8" stroke-width="0.75"/></svg>
<div class="a t" style="left:64.00px;top:323.80px;font-size:5.4px;line-height:5.4px;color:#e2e2e2;transform:scaleX(0.790);transform-origin:0 0;">Behavior properties</div>
<svg class="a" style="left:104.3px;top:322.6px;" width="8" height="8" viewBox="0 0 8 8"><rect x="0.4" y="0.4" width="5.4" height="5.6" fill="none" stroke="#c8c8c8" stroke-width="0.75"/><path d="M1.2 3.1 L2.6 4.6 L5 1.3" fill="none" stroke="#ffffff" stroke-width="1.1"/></svg>
<div class="a t" style="left:111.70px;top:323.80px;font-size:5.4px;line-height:5.4px;color:#e2e2e2;transform:scaleX(0.847);transform-origin:0 0;">Signals</div>
<svg class="a" style="left:130px;top:322.6px;" width="8" height="8" viewBox="0 0 8 8"><rect x="0.4" y="0.4" width="5.4" height="5.6" fill="none" stroke="#c8c8c8" stroke-width="0.75"/></svg>
<div class="a t" style="left:136.70px;top:323.80px;font-size:5.4px;line-height:5.4px;color:#e2e2e2;transform:scaleX(0.785);transform-origin:0 0;">Signal maps</div>
<svg class="a" style="left:163px;top:322.6px;" width="8" height="8" viewBox="0 0 8 8"><rect x="0.4" y="0.4" width="5.4" height="5.6" fill="none" stroke="#c8c8c8" stroke-width="0.75"/><path d="M1.2 3.1 L2.6 4.6 L5 1.3" fill="none" stroke="#ffffff" stroke-width="1.1"/></svg>
<div class="a t" style="left:171.00px;top:323.80px;font-size:5.4px;line-height:5.4px;color:#e2e2e2;transform:scaleX(0.796);transform-origin:0 0;">Degrees of freedom</div>
<div class="a" style="left:2.40px;top:331.80px;width:340.80px;height:46.40px;background:#272727;border:0.8px solid #3e3e3e;box-sizing:border-box;"></div>
<div class="a" style="left:2.40px;top:331.80px;width:340.80px;height:10.80px;background:#2b2b2b;border:0.8px solid #3e3e3e;box-sizing:border-box;"></div>
<div class="a" style="left:2.40px;top:342.60px;width:340.80px;height:0.80px;background:#3e3e3e;"></div>
<div class="a" style="left:2.40px;top:351.40px;width:340.80px;height:0.80px;background:#3e3e3e;"></div>
<div class="a" style="left:19.50px;top:331.80px;width:0.80px;height:35.50px;background:#3e3e3e;"></div>
<div class="a" style="left:71.00px;top:331.80px;width:0.80px;height:35.50px;background:#3e3e3e;"></div>
<div class="a" style="left:143.30px;top:331.80px;width:0.80px;height:35.50px;background:#3e3e3e;"></div>
<div class="a" style="left:216.00px;top:331.80px;width:0.80px;height:35.50px;background:#3e3e3e;"></div>
<div class="a" style="left:287.30px;top:331.80px;width:0.80px;height:35.50px;background:#3e3e3e;"></div>
<div class="a t" style="left:6.00px;top:335.90px;font-size:5.2px;line-height:5.2px;color:#8c8c8c;transform:scaleX(0.875);transform-origin:0 0;">Co...</div>
<div class="a t" style="left:23.50px;top:335.90px;font-size:5.2px;line-height:5.2px;color:#8c8c8c;transform:scaleX(0.838);transform-origin:0 0;">Simulation structure</div>
<div class="a t" style="left:75.60px;top:335.90px;font-size:5.2px;line-height:5.2px;color:#8c8c8c;transform:scaleX(0.833);transform-origin:0 0;">Parent component</div>
<div class="a t" style="left:147.00px;top:335.90px;font-size:5.2px;line-height:5.2px;color:#8c8c8c;transform:scaleX(0.845);transform-origin:0 0;">Variable name</div>
<div class="a t" style="left:219.50px;top:335.90px;font-size:5.2px;line-height:5.2px;color:#8c8c8c;transform:scaleX(0.801);transform-origin:0 0;">Variable type</div>
<div class="a t" style="left:291.00px;top:335.90px;font-size:5.2px;line-height:5.2px;color:#8c8c8c;transform:scaleX(0.808);transform-origin:0 0;">Description</div>
<svg class="a" style="left:23.5px;top:344.9px;" width="6" height="6" viewBox="0 0 6 6"><rect x="0.3" y="0.3" width="4.4" height="4.4" fill="#1a1a1a"/><path d="M1 1 L4 4 M4 1 L1 4" stroke="#000" stroke-width="1.3"/></svg>
<svg class="a" style="left:75.6px;top:344.9px;" width="6" height="6" viewBox="0 0 6 6"><rect x="0.3" y="0.3" width="4.4" height="4.4" fill="#1a1a1a"/><path d="M1 1 L4 4 M4 1 L1 4" stroke="#000" stroke-width="1.3"/></svg>
<svg class="a" style="left:147px;top:344.9px;" width="6" height="6" viewBox="0 0 6 6"><rect x="0.3" y="0.3" width="4.4" height="4.4" fill="#1a1a1a"/><path d="M1 1 L4 4 M4 1 L1 4" stroke="#000" stroke-width="1.3"/></svg>
<svg class="a" style="left:219.5px;top:344.9px;" width="6" height="6" viewBox="0 0 6 6"><rect x="0.3" y="0.3" width="4.4" height="4.4" fill="#1a1a1a"/><path d="M1 1 L4 4 M4 1 L1 4" stroke="#000" stroke-width="1.3"/></svg>
<svg class="a" style="left:291px;top:344.9px;" width="6" height="6" viewBox="0 0 6 6"><rect x="0.3" y="0.3" width="4.4" height="4.4" fill="#1a1a1a"/><path d="M1 1 L4 4 M4 1 L1 4" stroke="#000" stroke-width="1.3"/></svg>
<svg class="a" style="left:7px;top:344.8px;" width="12" height="6" viewBox="0 0 12 6"><path d="M0 1.6 H2 L1 2.8Z" fill="#a0a0a0"/><path d="M4.2 0.5 H7.2 M5.7 0.5 V4.4" stroke="#6a6a6a" stroke-width="0.7"/><path d="M7.4 2.8 L9.6 4.8 M9.6 2.8 L7.4 4.8" stroke="#5e5e5e" stroke-width="0.6"/></svg>
<svg class="a" style="left:60px;top:344.8px;" width="12" height="6" viewBox="0 0 12 6"><path d="M0 1.6 H2 L1 2.8Z" fill="#a0a0a0"/><path d="M4.2 0.5 H7.2 M5.7 0.5 V4.4" stroke="#6a6a6a" stroke-width="0.7"/><path d="M7.4 2.8 L9.6 4.8 M9.6 2.8 L7.4 4.8" stroke="#5e5e5e" stroke-width="0.6"/></svg>
<svg class="a" style="left:129px;top:344.8px;" width="12" height="6" viewBox="0 0 12 6"><path d="M0 1.6 H2 L1 2.8Z" fill="#a0a0a0"/><path d="M4.2 0.5 H7.2 M5.7 0.5 V4.4" stroke="#6a6a6a" stroke-width="0.7"/><path d="M7.4 2.8 L9.6 4.8 M9.6 2.8 L7.4 4.8" stroke="#5e5e5e" stroke-width="0.6"/></svg>
<svg class="a" style="left:202.5px;top:344.8px;" width="12" height="6" viewBox="0 0 12 6"><path d="M0 1.6 H2 L1 2.8Z" fill="#a0a0a0"/><path d="M4.2 0.5 H7.2 M5.7 0.5 V4.4" stroke="#6a6a6a" stroke-width="0.7"/><path d="M7.4 2.8 L9.6 4.8 M9.6 2.8 L7.4 4.8" stroke="#5e5e5e" stroke-width="0.6"/></svg>
<svg class="a" style="left:274px;top:344.8px;" width="12" height="6" viewBox="0 0 12 6"><path d="M0 1.6 H2 L1 2.8Z" fill="#a0a0a0"/><path d="M4.2 0.5 H7.2 M5.7 0.5 V4.4" stroke="#6a6a6a" stroke-width="0.7"/><path d="M7.4 2.8 L9.6 4.8 M9.6 2.8 L7.4 4.8" stroke="#5e5e5e" stroke-width="0.6"/></svg>
<svg class="a" style="left:337px;top:344.8px;" width="12" height="6" viewBox="0 0 12 6"><path d="M0 1.6 H2 L1 2.8Z" fill="#a0a0a0"/><path d="M4.2 0.5 H7.2 M5.7 0.5 V4.4" stroke="#6a6a6a" stroke-width="0.7"/><path d="M7.4 2.8 L9.6 4.8 M9.6 2.8 L7.4 4.8" stroke="#5e5e5e" stroke-width="0.6"/></svg>
<div class="a" style="left:21.50px;top:355.40px;width:3.00px;height:0.90px;background:#e8e8e8;"></div>
<svg class="a" style="left:27px;top:352.6px;" width="7" height="8" viewBox="0 0 7 8"><path d="M0.6 0.6 H2.8 L5.2 3.1 L2.8 5.6 H0.6Z" fill="none" stroke="#e0a000" stroke-width="0.9"/><path d="M1.6 1.9 L3.2 3.1 L1.6 4.3Z" fill="#3a6ab0"/></svg>
<div class="a t" style="left:35.00px;top:353.75px;font-size:5.5px;line-height:5.5px;color:#e2e2e2;transform:scaleX(0.779);transform-origin:0 0;">Block_Component</div>
<div class="a t" style="left:75.00px;top:353.45px;font-size:5.5px;line-height:5.5px;color:#e2e2e2;transform:scaleX(0.779);transform-origin:0 0;">Block_Component</div>
<div class="a" style="left:3.20px;top:359.20px;width:339.20px;height:8.00px;background:#1f4b62;"></div>
<div class="a" style="left:28.40px;top:358.00px;width:0.60px;height:5.00px;background:#5a5a5a;"></div>
<div class="a" style="left:28.40px;top:362.60px;width:2.60px;height:0.60px;background:#5a5a5a;"></div>
<svg class="a" style="left:31px;top:360.2px;" width="7" height="7" viewBox="0 0 7 7"><path d="M2.8 0 L0.4 3 H1.9 L1.3 5.6 L3.9 2.4 H2.3Z" fill="#f0b000"/><path d="M4.6 3.6 V5.4" stroke="#7ab0e0" stroke-width="0.6"/></svg>
<div class="a t" style="left:38.50px;top:361.55px;font-size:5.5px;line-height:5.5px;color:#f0f0f0;transform:scaleX(0.709);transform-origin:0 0;">Pos_X</div>
<svg class="a" style="left:8px;top:360.4px;" width="8" height="7" viewBox="0 0 8 7"><path d="M2.6 3.6 L3.8 2.4" stroke="#5ab0e0" stroke-width="0.6"/><rect x="0.3" y="2.6" width="3" height="2.2" rx="1.1" transform="rotate(-45 1.8 3.7)" fill="none" stroke="#5ab0e0" stroke-width="0.7"/><rect x="3" y="0.8" width="3" height="2.2" rx="1.1" transform="rotate(-45 4.5 1.9)" fill="none" stroke="#5ab0e0" stroke-width="0.7"/></svg>
<div class="a t" style="left:75.00px;top:361.25px;font-size:5.5px;line-height:5.5px;color:#f0f0f0;transform:scaleX(0.779);transform-origin:0 0;">Block_Component</div>
<div class="a t" style="left:147.00px;top:361.25px;font-size:5.5px;line-height:5.5px;color:#f0f0f0;transform:scaleX(0.703);transform-origin:0 0;">Pos_X</div>
<div class="a t" style="left:219.50px;top:361.25px;font-size:5.5px;line-height:5.5px;color:#f0f0f0;transform:scaleX(0.766);transform-origin:0 0;">Integer</div>
<svg class="a" style="left:3.6px;top:384.2px;" width="11" height="9" viewBox="0 0 11 9"><path d="M0.3 0.8 H6 M0.3 2.6 H6.4 M0.3 4.4 H4 M0.3 6.2 H3.4" stroke="#f0f0f0" stroke-width="1"/><circle cx="5.8" cy="6" r="1.5" fill="none" stroke="#e0a000" stroke-width="0.8"/><path d="M8.4 3.8 H9.8 L9.1 4.6Z" fill="#e0e0e0"/></svg>
<div class="a" style="left:326.80px;top:382.30px;width:36.20px;height:12.30px;border:0.8px solid #474747;box-sizing:border-box;"></div>
<div class="a t" style="left:334.00px;top:387.00px;font-size:4.6px;line-height:4.6px;color:#6a6a6a;transform:scaleX(0.796);transform-origin:0 0;">Pair Selected</div>
<div class="a" style="left:2.00px;top:398.20px;width:688.00px;height:0.90px;background:#3a3a3a;"></div>
<div class="a t" style="left:1.90px;top:404.70px;font-size:5.2px;line-height:5.2px;color:#e8e8e8;transform:scaleX(0.811);transform-origin:0 0;font-weight:bold;">Paired Variables</div>
<div class="a" style="left:664.70px;top:402.50px;width:22.60px;height:8.80px;border:0.8px solid #474747;box-sizing:border-box;"></div>
<div class="a t" style="left:669.70px;top:405.40px;font-size:4.6px;line-height:4.6px;color:#6a6a6a;transform:scaleX(0.870);transform-origin:0 0;">Unpair</div>
<div class="a" style="left:0.00px;top:412.50px;width:690.00px;height:1.50px;background:#1e1e1e;"></div>
<div class="a t" style="left:346.70px;top:314.00px;font-size:5.2px;line-height:5.2px;color:#e8e8e8;transform:scaleX(0.811);transform-origin:0 0;font-weight:bold;">Selected server:</div>
<div class="a t" style="left:380.50px;top:314.00px;font-size:5.2px;line-height:5.2px;color:#e2e2e2;transform:scaleX(0.802);transform-origin:0 0;">Server</div>
<div class="a t" style="left:346.70px;top:322.20px;font-size:5.2px;line-height:5.2px;color:#e8e8e8;transform:scaleX(0.842);transform-origin:0 0;font-weight:bold;">Adding to group:</div>
<div class="a t" style="left:383.40px;top:322.20px;font-size:5.2px;line-height:5.2px;color:#e2e2e2;transform:scaleX(0.838);transform-origin:0 0;">Server to simulation</div>
<div class="a" style="left:346.80px;top:332.40px;width:340.00px;height:45.80px;background:#272727;border:0.8px solid #3e3e3e;box-sizing:border-box;"></div>
<div class="a" style="left:346.80px;top:332.40px;width:340.00px;height:10.20px;background:#2b2b2b;border:0.8px solid #3e3e3e;box-sizing:border-box;"></div>
<div class="a" style="left:346.80px;top:342.40px;width:340.00px;height:0.80px;background:#3e3e3e;"></div>
<div class="a" style="left:346.80px;top:350.80px;width:340.00px;height:0.80px;background:#3e3e3e;"></div>
<div class="a" style="left:387.10px;top:332.40px;width:0.80px;height:45.80px;background:#3e3e3e;"></div>
<div class="a" style="left:415.50px;top:332.40px;width:0.80px;height:45.80px;background:#3e3e3e;"></div>
<div class="a" style="left:451.40px;top:332.40px;width:0.80px;height:45.80px;background:#3e3e3e;"></div>
<div class="a" style="left:487.60px;top:332.40px;width:0.80px;height:45.80px;background:#3e3e3e;"></div>
<div class="a t" style="left:351.00px;top:336.10px;font-size:5.2px;line-height:5.2px;color:#8c8c8c;transform:scaleX(0.817);transform-origin:0 0;">Server structure</div>
<div class="a t" style="left:390.30px;top:336.10px;font-size:5.2px;line-height:5.2px;color:#8c8c8c;transform:scaleX(0.831);transform-origin:0 0;">Data type</div>
<div class="a t" style="left:419.20px;top:336.10px;font-size:5.2px;line-height:5.2px;color:#8c8c8c;transform:scaleX(0.813);transform-origin:0 0;">Server type</div>
<div class="a t" style="left:455.00px;top:336.10px;font-size:5.2px;line-height:5.2px;color:#8c8c8c;transform:scaleX(0.741);transform-origin:0 0;">Access</div>
<div class="a t" style="left:491.30px;top:336.10px;font-size:5.2px;line-height:5.2px;color:#8c8c8c;transform:scaleX(0.835);transform-origin:0 0;">Description</div>
<svg class="a" style="left:351px;top:344.5px;" width="6" height="6" viewBox="0 0 6 6"><rect x="0.3" y="0.3" width="4.4" height="4.4" fill="#1a1a1a"/><path d="M1 1 L4 4 M4 1 L1 4" stroke="#000" stroke-width="1.3"/></svg>
<svg class="a" style="left:390.3px;top:344.5px;" width="6" height="6" viewBox="0 0 6 6"><rect x="0.3" y="0.3" width="4.4" height="4.4" fill="#1a1a1a"/><path d="M1 1 L4 4 M4 1 L1 4" stroke="#000" stroke-width="1.3"/></svg>
<svg class="a" style="left:419.2px;top:344.5px;" width="6" height="6" viewBox="0 0 6 6"><rect x="0.3" y="0.3" width="4.4" height="4.4" fill="#1a1a1a"/><path d="M1 1 L4 4 M4 1 L1 4" stroke="#000" stroke-width="1.3"/></svg>
<svg class="a" style="left:455px;top:344.5px;" width="6" height="6" viewBox="0 0 6 6"><rect x="0.3" y="0.3" width="4.4" height="4.4" fill="#1a1a1a"/><path d="M1 1 L4 4 M4 1 L1 4" stroke="#000" stroke-width="1.3"/></svg>
<svg class="a" style="left:491.3px;top:344.5px;" width="6" height="6" viewBox="0 0 6 6"><rect x="0.3" y="0.3" width="4.4" height="4.4" fill="#1a1a1a"/><path d="M1 1 L4 4 M4 1 L1 4" stroke="#000" stroke-width="1.3"/></svg>
<svg class="a" style="left:373px;top:344.6px;" width="12" height="6" viewBox="0 0 12 6"><path d="M0 1.6 H2 L1 2.8Z" fill="#a0a0a0"/><path d="M4.2 0.5 H7.2 M5.7 0.5 V4.4" stroke="#6a6a6a" stroke-width="0.7"/><path d="M7.4 2.8 L9.6 4.8 M9.6 2.8 L7.4 4.8" stroke="#5e5e5e" stroke-width="0.6"/></svg>
<svg class="a" style="left:402px;top:344.6px;" width="12" height="6" viewBox="0 0 12 6"><path d="M0 1.6 H2 L1 2.8Z" fill="#a0a0a0"/><path d="M4.2 0.5 H7.2 M5.7 0.5 V4.4" stroke="#6a6a6a" stroke-width="0.7"/><path d="M7.4 2.8 L9.6 4.8 M9.6 2.8 L7.4 4.8" stroke="#5e5e5e" stroke-width="0.6"/></svg>
<svg class="a" style="left:441.6px;top:344.6px;" width="12" height="6" viewBox="0 0 12 6"><path d="M0 1.6 H2 L1 2.8Z" fill="#a0a0a0"/><path d="M4.2 0.5 H7.2 M5.7 0.5 V4.4" stroke="#6a6a6a" stroke-width="0.7"/><path d="M7.4 2.8 L9.6 4.8 M9.6 2.8 L7.4 4.8" stroke="#5e5e5e" stroke-width="0.6"/></svg>
<svg class="a" style="left:477.3px;top:344.6px;" width="12" height="6" viewBox="0 0 12 6"><path d="M0 1.6 H2 L1 2.8Z" fill="#a0a0a0"/><path d="M4.2 0.5 H7.2 M5.7 0.5 V4.4" stroke="#6a6a6a" stroke-width="0.7"/><path d="M7.4 2.8 L9.6 4.8 M9.6 2.8 L7.4 4.8" stroke="#5e5e5e" stroke-width="0.6"/></svg>
<svg class="a" style="left:668px;top:344.6px;" width="12" height="6" viewBox="0 0 12 6"><path d="M0 1.6 H2 L1 2.8Z" fill="#a0a0a0"/><path d="M4.2 0.5 H7.2 M5.7 0.5 V4.4" stroke="#6a6a6a" stroke-width="0.7"/><path d="M7.4 2.8 L9.6 4.8 M9.6 2.8 L7.4 4.8" stroke="#5e5e5e" stroke-width="0.6"/></svg>
<div class="a" style="left:349.20px;top:355.20px;width:3.00px;height:0.90px;background:#e8e8e8;"></div>
<svg class="a" style="left:354.6px;top:352.6px;" width="8" height="7" viewBox="0 0 8 7"><path d="M0.3 0.6 H2.4 L3 1.4 H6 V5 H0.3Z" fill="#f0b400"/></svg>
<div class="a t" style="left:362.50px;top:353.80px;font-size:5.0px;line-height:5.0px;color:#e2e2e2;transform:scaleX(0.841);transform-origin:0 0;">From SIMIT</div>
<div class="a" style="left:347.60px;top:359.60px;width:333.40px;height:7.60px;background:#1f4b62;"></div>
<div class="a" style="left:352.00px;top:358.00px;width:0.60px;height:14.00px;background:#5a5a5a;"></div>
<div class="a" style="left:352.00px;top:363.40px;width:5.00px;height:0.60px;background:#5a5a5a;"></div>
<div class="a" style="left:352.00px;top:371.20px;width:5.00px;height:0.60px;background:#5a5a5a;"></div>
<svg class="a" style="left:359px;top:360.6px;" width="7" height="7" viewBox="0 0 7 7"><path d="M0.4 5 H5.6 M1.4 5 V2 M3 5 V0.6 M4.6 5 V2.8" stroke="#e0e0e0" stroke-width="0.7"/><path d="M2 1.4 L3 0.4 L4 1.4" fill="none" stroke="#e0e0e0" stroke-width="0.5"/></svg>
<div class="a t" style="left:366.50px;top:361.50px;font-size:5.4px;line-height:5.4px;color:#f0f0f0;transform:scaleX(0.677);transform-origin:0 0;">PP_Pos_X</div>
<svg class="a" style="left:359px;top:368.6px;" width="7" height="7" viewBox="0 0 7 7"><path d="M0.4 5 H5.6 M1.4 5 V2 M3 5 V0.6 M4.6 5 V2.8" stroke="#e0e0e0" stroke-width="0.7"/><path d="M2 1.4 L3 0.4 L4 1.4" fill="none" stroke="#e0e0e0" stroke-width="0.5"/></svg>
<div class="a t" style="left:366.50px;top:369.40px;font-size:5.4px;line-height:5.4px;color:#e2e2e2;transform:scaleX(0.677);transform-origin:0 0;">PP_Pos_Y</div>
<div class="a t" style="left:390.30px;top:361.50px;font-size:5.4px;line-height:5.4px;color:#f0f0f0;transform:scaleX(0.826);transform-origin:0 0;">Int64</div>
<div class="a t" style="left:419.20px;top:361.50px;font-size:5.4px;line-height:5.4px;color:#f0f0f0;transform:scaleX(0.774);transform-origin:0 0;">Integer</div>
<div class="a t" style="left:455.00px;top:361.50px;font-size:5.4px;line-height:5.4px;color:#f0f0f0;transform:scaleX(0.772);transform-origin:0 0;">Read-only</div>
<div class="a t" style="left:390.30px;top:369.40px;font-size:5.4px;line-height:5.4px;color:#e2e2e2;transform:scaleX(0.826);transform-origin:0 0;">Int64</div>
<div class="a t" style="left:419.20px;top:369.40px;font-size:5.4px;line-height:5.4px;color:#e2e2e2;transform:scaleX(0.774);transform-origin:0 0;">Integer</div>
<div class="a t" style="left:455.00px;top:369.40px;font-size:5.4px;line-height:5.4px;color:#e2e2e2;transform:scaleX(0.772);transform-origin:0 0;">Read-only</div>
<div class="a t" style="left:491.00px;top:361.50px;font-size:5.4px;line-height:5.4px;color:#f0f0f0;transform:scaleX(0.783);transform-origin:0 0;">Push Plate position X</div>
<div class="a t" style="left:491.00px;top:369.40px;font-size:5.4px;line-height:5.4px;color:#e2e2e2;transform:scaleX(0.784);transform-origin:0 0;">Push Plate position Y</div>
<div class="a" style="left:347px;top:375.6px;width:334px;height:2.2px;overflow:hidden"><div class="a t" style="left:19px;top:-1px;font-size:5.4px;line-height:5.4px;color:#8a8a8a">PP_Pos_Z</div><div class="a t" style="left:43px;top:-1px;font-size:5.4px;line-height:5.4px;color:#8a8a8a">Int64</div><div class="a t" style="left:72px;top:-1px;font-size:5.4px;line-height:5.4px;color:#8a8a8a">Integer</div><div class="a t" style="left:108px;top:-1px;font-size:5.4px;line-height:5.4px;color:#8a8a8a">Read-only</div><div class="a t" style="left:144px;top:-1px;font-size:5.4px;line-height:5.4px;color:#8a8a8a">Push Plate position Z</div></div>
<div class="a" style="left:682.00px;top:333.20px;width:4.60px;height:44.20px;background:#3a3a3a;"></div>
<div class="a" style="left:682.80px;top:334.00px;width:3.00px;height:43.00px;background:#5a5a5a;"></div>
</body></html>
